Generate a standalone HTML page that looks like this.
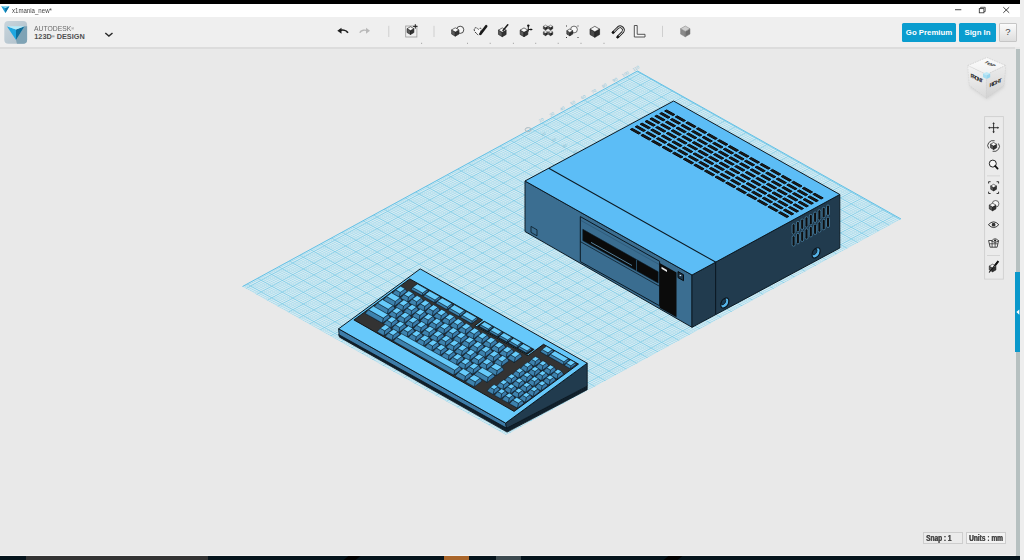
<!DOCTYPE html>
<html><head><meta charset="utf-8">
<style>
*{margin:0;padding:0;box-sizing:border-box}
html,body{width:1024px;height:560px;overflow:hidden;background:#e9e9e9;font-family:"Liberation Sans",sans-serif}
.a{position:absolute}
.btn{position:absolute;top:23px;height:19px;background:#0a9dcf;color:#fff;font-weight:bold;font-size:7.8px;line-height:19px;text-align:center;border-radius:1.5px}
svg{position:absolute;left:0;top:0}
.sb{position:absolute;top:532px;height:11.5px;border:1px solid #cdcdcd;font-size:8.2px;font-weight:bold;color:#474747;line-height:11.5px;white-space:nowrap;overflow:hidden;text-shadow:0.35px 0 #474747}
</style></head><body>
<div class="a" style="left:0;top:48px;width:1015px;height:508px;background:#e9e9e9"></div>
<div class="a" style="left:1015.5px;top:48.5px;width:4.3px;height:507px;background:#b6c0c0"></div>
<div class="a" style="left:1020px;top:0;width:4px;height:560px;background:#eeeeee"></div>
<div class="a" style="left:1015px;top:272px;width:5px;height:80px;background:#0a98cb"></div>
<div class="a" style="left:0;top:0;width:1020px;height:4px;background:#000"></div>
<div class="a" style="left:0;top:4px;width:1020px;height:12.5px;background:#fff"></div>
<div class="a" style="left:0;top:16.5px;width:1020px;height:30.5px;background:#efefef"></div>
<div class="a" style="left:0;top:46.5px;width:1015px;height:2.5px;background:#dcdcdc"></div>
<div class="a" style="left:0;top:555px;width:1015px;height:1px;background:#f2f2f2"></div>
<div class="a" style="left:0;top:556px;width:1020px;height:4px;background:#06141c"></div>
<div class="a" style="left:26px;top:556px;width:182px;height:4px;background:#333333"></div>
<div class="a" style="left:443.7px;top:556px;width:25.3px;height:4px;background:#a9652a"></div>
<div class="a" style="left:496px;top:556px;width:25px;height:4px;background:#3d4a50"></div>
<div class="a" style="left:346px;top:556px;width:12px;height:4px;background:#000;transform:skewX(-50deg)"></div>
<div class="a" style="left:666px;top:556px;width:14px;height:4px;background:#000;transform:skewX(-50deg)"></div>
<div class="btn" style="left:902px;width:54px">Go Premium</div>
<div class="btn" style="left:959px;width:37px">Sign In</div>
<div class="a" style="left:999px;top:23px;width:18px;height:18.5px;background:linear-gradient(#fbfbfb,#dedede);border:1px solid #c6c6c6;border-radius:1px;font-size:9.5px;line-height:16.5px;text-align:center;color:#444">?</div>
<div class="a" style="left:34.3px;top:25.3px;font-size:7.3px;line-height:8px;color:#6a6a6a;transform:scaleX(0.93);transform-origin:0 0;white-space:nowrap">AUTODESK<span style="font-size:4px;vertical-align:top">&reg;</span></div>
<div class="a" style="left:34.3px;top:33.2px;font-size:7.3px;line-height:8px;color:#505050;font-weight:bold;white-space:nowrap">123D<span style="font-size:4px;vertical-align:top">&reg;</span> DESIGN</div>
<div class="a" style="left:12px;top:6.5px;font-size:8px;line-height:8px;color:#444;transform:scaleX(0.76);transform-origin:0 0;white-space:nowrap">x1mania_new*</div>
<svg width="1024" height="560" viewBox="0 0 1024 560">
<polygon points="1.2,6.3 9.4,6.3 5.4,13.1" fill="#1b9fd6"/><polygon points="5.4,8 9.4,6.3 5.4,13.1" fill="#0f6e9c"/><polygon points="1.2,6.3 9.4,6.3 5.4,8" fill="#9fe0f5"/><defs><linearGradient id="lg1" x1="0" y1="0" x2="1" y2="1"><stop offset="0" stop-color="#c9d5dc"/><stop offset="1" stop-color="#aebfca"/></linearGradient><clipPath id="lc"><rect x="4.3" y="20.9" width="22.8" height="22.8" rx="4"/></clipPath></defs><rect x="4.3" y="20.9" width="22.8" height="22.8" rx="4" fill="url(#lg1)"/><polygon clip-path="url(#lc)" points="24.6,26.3 30,26.3 30,46 17.5,46 16,40" fill="#7fa3b5"/><polygon points="6.9,26.3 16,29.4 16,40" fill="#1fa7e0"/><polygon points="24.6,26.3 16,29.4 16,40" fill="#0e6f9c"/><polygon points="6.9,26.3 24.6,26.3 16,29.4" fill="#b5ebfa"/><polyline points="105.3,33 108.9,36 112.5,33" fill="none" stroke="#2a2a2a" stroke-width="1.5"/><path d="M339,30.8 C342,29.6 346,29.8 348,32.8" fill="none" stroke="#1e1e1e" stroke-width="1.6"/><polygon points="337.3,30.8 341.5,27.8 341.5,33.8" fill="#1e1e1e"/><path d="M368,30.8 C365,29.6 361,29.8 359.8,32.8" fill="none" stroke="#b9b9b9" stroke-width="1.4"/><polygon points="370,30.8 366,27.8 366,33.8" fill="#b9b9b9"/><rect x="388.3" y="25.8" width="1" height="11.2" fill="#cfcfcf"/><rect x="433.5" y="25.8" width="1" height="11.2" fill="#cfcfcf"/><rect x="662" y="25.8" width="1" height="11.2" fill="#cfcfcf"/><rect x="405.7" y="26" width="11.2" height="11" fill="none" stroke="#9a9a9a" stroke-width="0.8"/><polygon points="407.11,28.65 410.50,30.60 410.50,34.50 407.11,32.55" fill="#5a5a5a" stroke="#1a1a1a" stroke-width="0.6" stroke-linejoin="round"/><polygon points="410.50,30.60 413.89,28.65 413.89,32.55 410.50,34.50" fill="#333" stroke="#1a1a1a" stroke-width="0.6" stroke-linejoin="round"/><polygon points="410.50,26.70 413.89,28.65 410.50,30.60 407.11,28.65" fill="#fafafa" stroke="#1a1a1a" stroke-width="0.6" stroke-linejoin="round"/><path d="M415.3,24.2V28.6M413.1,26.4H417.5" stroke="#222" stroke-width="1"/><circle cx="460.2" cy="29.8" r="3.6" fill="#f6f6f6" stroke="#222" stroke-width="0.8"/><polygon points="451.65,29.90 455.30,32.00 455.30,36.20 451.65,34.10" fill="#5a5a5a" stroke="#1a1a1a" stroke-width="0.6" stroke-linejoin="round"/><polygon points="455.30,32.00 458.95,29.90 458.95,34.10 455.30,36.20" fill="#333" stroke="#1a1a1a" stroke-width="0.6" stroke-linejoin="round"/><polygon points="455.30,27.80 458.95,29.90 455.30,32.00 451.65,29.90" fill="#fafafa" stroke="#1a1a1a" stroke-width="0.6" stroke-linejoin="round"/><path d="M476.5,33.5 C473.5,31 473.5,27.5 476,27.8 C477.5,28 478,29 478.5,29.3 C479.5,28 481,27.8 481.5,29.5 L480,34 C479,35.5 477.8,35 476.5,33.5Z" fill="#f8f8f8" stroke="#222" stroke-width="0.9" stroke-dasharray="2 1"/><path d="M480.5,33.8 L486.2,26.2" stroke="#1a1a1a" stroke-width="2.6" stroke-linecap="round"/><polygon points="498.47,30.10 502.30,32.30 502.30,36.70 498.47,34.50" fill="#5a5a5a" stroke="#1a1a1a" stroke-width="0.6" stroke-linejoin="round"/><polygon points="502.30,32.30 506.13,30.10 506.13,34.50 502.30,36.70" fill="#333" stroke="#1a1a1a" stroke-width="0.6" stroke-linejoin="round"/><polygon points="502.30,27.90 506.13,30.10 502.30,32.30 498.47,30.10" fill="#fafafa" stroke="#1a1a1a" stroke-width="0.6" stroke-linejoin="round"/><path d="M503,30.5 L507.8,24.8" stroke="#1a1a1a" stroke-width="1.5" stroke-linecap="round"/><polygon points="520.17,30.10 524.00,32.30 524.00,36.70 520.17,34.50" fill="#5a5a5a" stroke="#1a1a1a" stroke-width="0.6" stroke-linejoin="round"/><polygon points="524.00,32.30 527.83,30.10 527.83,34.50 524.00,36.70" fill="#333" stroke="#1a1a1a" stroke-width="0.6" stroke-linejoin="round"/><polygon points="524.00,27.90 527.83,30.10 524.00,32.30 520.17,30.10" fill="#fafafa" stroke="#1a1a1a" stroke-width="0.6" stroke-linejoin="round"/><path d="M528.3,26 V31.5 M528.3,29.5 H532.2" stroke="#1a1a1a" stroke-width="1"/><polygon points="532.6,29.5 530.6,28.2 530.6,30.8" fill="#111"/><circle cx="528.3" cy="25.6" r="1.2" fill="#111"/><polygon points="543.33,26.35 545.50,27.60 545.50,30.10 543.33,28.85" fill="#444" stroke="#1a1a1a" stroke-width="0.4" stroke-linejoin="round"/><polygon points="545.50,27.60 547.67,26.35 547.67,28.85 545.50,30.10" fill="#222" stroke="#1a1a1a" stroke-width="0.4" stroke-linejoin="round"/><polygon points="545.50,25.10 547.67,26.35 545.50,27.60 543.33,26.35" fill="#f0f0f0" stroke="#1a1a1a" stroke-width="0.4" stroke-linejoin="round"/><polygon points="548.43,26.35 550.60,27.60 550.60,30.10 548.43,28.85" fill="#444" stroke="#1a1a1a" stroke-width="0.4" stroke-linejoin="round"/><polygon points="550.60,27.60 552.77,26.35 552.77,28.85 550.60,30.10" fill="#222" stroke="#1a1a1a" stroke-width="0.4" stroke-linejoin="round"/><polygon points="550.60,25.10 552.77,26.35 550.60,27.60 548.43,26.35" fill="#f0f0f0" stroke="#1a1a1a" stroke-width="0.4" stroke-linejoin="round"/><polygon points="543.33,31.95 545.50,33.20 545.50,35.70 543.33,34.45" fill="#444" stroke="#1a1a1a" stroke-width="0.4" stroke-linejoin="round"/><polygon points="545.50,33.20 547.67,31.95 547.67,34.45 545.50,35.70" fill="#222" stroke="#1a1a1a" stroke-width="0.4" stroke-linejoin="round"/><polygon points="545.50,30.70 547.67,31.95 545.50,33.20 543.33,31.95" fill="#f0f0f0" stroke="#1a1a1a" stroke-width="0.4" stroke-linejoin="round"/><polygon points="548.43,31.95 550.60,33.20 550.60,35.70 548.43,34.45" fill="#444" stroke="#1a1a1a" stroke-width="0.4" stroke-linejoin="round"/><polygon points="550.60,33.20 552.77,31.95 552.77,34.45 550.60,35.70" fill="#222" stroke="#1a1a1a" stroke-width="0.4" stroke-linejoin="round"/><polygon points="550.60,30.70 552.77,31.95 550.60,33.20 548.43,31.95" fill="#f0f0f0" stroke="#1a1a1a" stroke-width="0.4" stroke-linejoin="round"/><circle cx="574" cy="29.5" r="3.4" fill="#f8f8f8" stroke="#333" stroke-width="0.7"/><polygon points="566.84,30.70 569.80,32.40 569.80,35.80 566.84,34.10" fill="#5a5a5a" stroke="#1a1a1a" stroke-width="0.6" stroke-linejoin="round"/><polygon points="569.80,32.40 572.76,30.70 572.76,34.10 569.80,35.80" fill="#333" stroke="#1a1a1a" stroke-width="0.6" stroke-linejoin="round"/><polygon points="569.80,29.00 572.76,30.70 569.80,32.40 566.84,30.70" fill="#fafafa" stroke="#1a1a1a" stroke-width="0.6" stroke-linejoin="round"/><rect x="566" y="25.5" width="1" height="1" fill="#333"/><rect x="577.5" y="25.5" width="1" height="1" fill="#333"/><rect x="566" y="37" width="1" height="1" fill="#333"/><rect x="577.5" y="37" width="1" height="1" fill="#333"/><polygon points="590.01,29.05 594.80,31.80 594.80,37.30 590.01,34.55" fill="#4a4a4a" stroke="#1a1a1a" stroke-width="0.6" stroke-linejoin="round"/><polygon points="594.80,31.80 599.58,29.05 599.58,34.55 594.80,37.30" fill="#2e2e2e" stroke="#1a1a1a" stroke-width="0.6" stroke-linejoin="round"/><polygon points="594.80,26.30 599.58,29.05 594.80,31.80 590.01,29.05" fill="#f4f4f4" stroke="#1a1a1a" stroke-width="0.6" stroke-linejoin="round"/><path d="M613,32.6 L618.2,27.4 A3.3,3.3 0 0 1 622.8,32 L617.6,37.2" fill="none" stroke="#222" stroke-width="2.6"/><path d="M613,32.6 L618.2,27.4 A3.3,3.3 0 0 1 622.8,32 L617.6,37.2" fill="none" stroke="#f4f4f4" stroke-width="1"/><path d="M612.2,33.4 L614,31.6 M616.8,38 L618.6,36.2" stroke="#111" stroke-width="2.4"/><path d="M634.3,25.5 H637.2 V34.3 H645 V37 H634.3 Z" fill="#f6f6f6" stroke="#444" stroke-width="0.9"/><polygon points="680.60,28.70 685.30,31.40 685.30,36.80 680.60,34.10" fill="#8a8a8a" stroke="#7a7a7a" stroke-width="0.5" stroke-linejoin="round"/><polygon points="685.30,31.40 690.00,28.70 690.00,34.10 685.30,36.80" fill="#6e6e6e" stroke="#7a7a7a" stroke-width="0.5" stroke-linejoin="round"/><polygon points="685.30,26.00 690.00,28.70 685.30,31.40 680.60,28.70" fill="#cfcfcf" stroke="#7a7a7a" stroke-width="0.5" stroke-linejoin="round"/><rect x="421.1" y="42.8" width="1" height="1" fill="#9a9a9a"/><rect x="467.0" y="42.8" width="1" height="1" fill="#9a9a9a"/><rect x="489.7" y="42.8" width="1" height="1" fill="#9a9a9a"/><rect x="512.9" y="42.8" width="1" height="1" fill="#9a9a9a"/><rect x="535.2" y="42.8" width="1" height="1" fill="#9a9a9a"/><rect x="557.7" y="42.8" width="1" height="1" fill="#9a9a9a"/><rect x="580.5" y="42.8" width="1" height="1" fill="#9a9a9a"/><rect x="603.5" y="42.8" width="1" height="1" fill="#9a9a9a"/><defs><linearGradient id="vct" x1="0" y1="0" x2="0" y2="1"><stop offset="0" stop-color="#fbfbfb"/><stop offset="1" stop-color="#f0f0f0"/></linearGradient><linearGradient id="vcl" x1="0" y1="0" x2="0" y2="1"><stop offset="0" stop-color="#f4f4f4"/><stop offset="1" stop-color="#d9d9d9"/></linearGradient><linearGradient id="vcr" x1="0" y1="0" x2="0" y2="1"><stop offset="0" stop-color="#ececec"/><stop offset="1" stop-color="#d2d2d2"/></linearGradient><filter id="vsh" x="-30%" y="-30%" width="160%" height="160%"><feGaussianBlur stdDeviation="1.6"/></filter></defs><polygon points="969,66 987,58 1005,66 1004,86 987,98 970,86" fill="#bdbdbd" opacity="0.5" filter="url(#vsh)" transform="translate(0,1.5)"/><polygon points="967.7,65.5 986.9,57.5 1005.7,65.5 986.4,74.6" fill="url(#vct)" stroke="#c4c4c4" stroke-width="0.6" stroke-dasharray="1.6 1"/><polygon points="967.7,65.5 986.4,74.6 986.4,98.2 969.3,85.3" fill="url(#vcl)" stroke="#cfcfcf" stroke-width="0.5" stroke-dasharray="1.6 1"/><polygon points="1005.7,65.5 986.4,74.6 986.4,98.2 1004,85.3" fill="url(#vcr)" stroke="#cfcfcf" stroke-width="0.5" stroke-dasharray="1.6 1"/><polygon points="986.6,72 990.2,73.6 986.6,75.4 983,73.6" fill="#bfe9f7"/><polygon points="983,73.6 986.6,75.4 986.6,79 983,77.2" fill="#a6def3"/><polygon points="990.2,73.6 986.6,75.4 986.6,79 990.2,77.2" fill="#94d4ee"/><text x="0" y="0" font-family="Liberation Sans" font-weight="bold" font-size="5.2" fill="#222" transform="matrix(0.9 0.42 -0.9 0.42 983.6 62.6)">TOP</text><text x="0" y="0" font-family="Liberation Sans" font-weight="bold" font-size="5.6" fill="#1e1e1e" transform="matrix(0.95 0.45 0 1 970.4 77.2)" textLength="13.2">FRONT</text><text x="0" y="0" font-family="Liberation Sans" font-weight="bold" font-size="5.6" fill="#1e1e1e" transform="matrix(0.95 -0.45 0 1 989.4 87.6)" textLength="13">RIGHT</text><rect x="984.6" y="116.6" width="18.8" height="162.5" fill="#ebebeb" stroke="#d0d0d0" stroke-width="0.9"/><path d="M993.6,123.2V132.2M989.1,127.7H998.1" stroke="#222" stroke-width="0.9"/><polygon points="993.6,122.2 992.3000000000001,123.8 994.9,123.8" fill="#222"/><polygon points="993.6,133.2 992.3000000000001,131.6 994.9,131.6" fill="#222"/><polygon points="988.1,127.7 989.7,126.4 989.7,129" fill="#222"/><polygon points="999.1,127.7 997.5,126.4 997.5,129" fill="#222"/><polygon points="990.56,144.25 993.60,146.00 993.60,149.50 990.56,147.75" fill="#5a5a5a" stroke="#1a1a1a" stroke-width="0.6" stroke-linejoin="round"/><polygon points="993.60,146.00 996.64,144.25 996.64,147.75 993.60,149.50" fill="#333" stroke="#1a1a1a" stroke-width="0.6" stroke-linejoin="round"/><polygon points="993.60,142.50 996.64,144.25 993.60,146.00 990.56,144.25" fill="#fafafa" stroke="#1a1a1a" stroke-width="0.6" stroke-linejoin="round"/><path d="M988.8000000000001,148.5 A5.5,5 0 0 1 994.6,140.7" fill="none" stroke="#222" stroke-width="0.8"/><path d="M998.4,143.5 A5.5,5 0 0 1 992.6,151.3" fill="none" stroke="#222" stroke-width="0.8"/><circle cx="992.8000000000001" cy="163.6" r="3.5" fill="#f7f7f7" stroke="#222" stroke-width="1"/><path d="M995.2,166 L997.6,168.6" stroke="#111" stroke-width="1.8" stroke-linecap="round"/><rect x="987" y="175.5" width="13" height="0.8" fill="#cfcfcf"/><polygon points="990.73,185.95 993.60,187.60 993.60,190.90 990.73,189.25" fill="#5a5a5a" stroke="#1a1a1a" stroke-width="0.6" stroke-linejoin="round"/><polygon points="993.60,187.60 996.47,185.95 996.47,189.25 993.60,190.90" fill="#333" stroke="#1a1a1a" stroke-width="0.6" stroke-linejoin="round"/><polygon points="993.60,184.30 996.47,185.95 993.60,187.60 990.73,185.95" fill="#fafafa" stroke="#1a1a1a" stroke-width="0.6" stroke-linejoin="round"/><path d="M988.6,183.5V181.7H990.6 M996.6,181.7H998.6V183.5 M988.6,191.7V193.5H990.6 M996.6,193.5H998.6V191.7" fill="none" stroke="#222" stroke-width="0.9"/><circle cx="995.6" cy="203.8" r="3.3" fill="#f5f5f5" stroke="#333" stroke-width="0.7"/><polygon points="989.29,205.10 992.60,207.00 992.60,210.80 989.29,208.90" fill="#5a5a5a" stroke="#1a1a1a" stroke-width="0.6" stroke-linejoin="round"/><polygon points="992.60,207.00 995.91,205.10 995.91,208.90 992.60,210.80" fill="#333" stroke="#1a1a1a" stroke-width="0.6" stroke-linejoin="round"/><polygon points="992.60,203.20 995.91,205.10 992.60,207.00 989.29,205.10" fill="#fafafa" stroke="#1a1a1a" stroke-width="0.6" stroke-linejoin="round"/><path d="M988.4,224.7 Q993.6,219 998.8000000000001,224.7 Q993.6,230.4 988.4,224.7Z" fill="#f4f4f4" stroke="#222" stroke-width="0.9"/><circle cx="993.6" cy="224.7" r="1.9" fill="#333"/><path d="M988.6,240.5 L998.6,240.5 L997.1,247.2 L990.1,247.2Z" fill="#f4f4f4" stroke="#222" stroke-width="0.8"/><path d="M989.4,243.8H997.8000000000001M992.1,240.5V247.2M995.1,240.5V247.2" stroke="#222" stroke-width="0.7"/><path d="M991.6,241 Q995.1,236.5 998.6,241 Q995.1,244 991.6,241Z" fill="#eee" stroke="#222" stroke-width="0.8"/><circle cx="995.1" cy="240.6" r="1.1" fill="#222"/><rect x="987" y="255" width="13" height="0.8" fill="#cfcfcf"/><polygon points="989.29,266.10 992.60,268.00 992.60,271.80 989.29,269.90" fill="#5a5a5a" stroke="#1a1a1a" stroke-width="0.6" stroke-linejoin="round"/><polygon points="992.60,268.00 995.91,266.10 995.91,269.90 992.60,271.80" fill="#333" stroke="#1a1a1a" stroke-width="0.6" stroke-linejoin="round"/><polygon points="992.60,264.20 995.91,266.10 992.60,268.00 989.29,266.10" fill="#fafafa" stroke="#1a1a1a" stroke-width="0.6" stroke-linejoin="round"/><path d="M989.1,272.5 L998.1,261" stroke="#111" stroke-width="1.1"/><path d="M995.1,265.5 L998.4,261.2" stroke="#111" stroke-width="2"/><rect x="955" y="9.3" width="6.3" height="0.9" fill="#333"/><rect x="979.3" y="8.6" width="4.6" height="4.2" fill="none" stroke="#333" stroke-width="0.85"/><path d="M980.6,8.4V7.3H985.2V11.6H984" fill="none" stroke="#333" stroke-width="0.8"/><path d="M1003.3,7.2L1009.2,12.8M1009.2,7.2L1003.3,12.8" stroke="#333" stroke-width="0.9"/><polygon points="1016.4,312.1 1019.3,309.4 1019.3,314.8" fill="#ffffff"/>
<defs>
<pattern id="gmin" patternUnits="userSpaceOnUse" width="2" height="2" patternTransform="matrix(1.05333 -0.57467 1.05400 0.59400 249.875 285.983)"><rect width="2" height="2" fill="#d3ebf3"/><path d="M0 0H2M0 0V2" stroke="#92d0e8" stroke-width="0.6" fill="none"/></pattern>
<pattern id="gmaj" patternUnits="userSpaceOnUse" width="10" height="10" patternTransform="matrix(1.05333 -0.57467 1.05400 0.59400 249.875 285.983)"><path d="M0 0H10M0 0V10" stroke="#6cc6e6" stroke-width="0.9" fill="none"/></pattern>
</defs>
<polygon points="242.5,286.5 637.5,71.0 901.0,219.0 506.0,435.0" fill="url(#gmin)"/>
<polygon points="242.5,286.5 637.5,71.0 901.0,219.0 506.0,435.0" fill="url(#gmaj)"/>
<polyline points="242.5,286.5 637.5,71.0 901.0,219.0" fill="none" stroke="#62c0e6" stroke-width="1"/>
<text x="0" y="0" font-family="Liberation Sans" font-size="4.3" fill="#88c4da" text-anchor="middle" transform="matrix(0.88 -0.48 0.55 0.85 541.9 121.3)">20</text>
<text x="0" y="0" font-family="Liberation Sans" font-size="4.3" fill="#88c4da" text-anchor="middle" transform="matrix(0.88 -0.48 0.55 0.85 552.5 115.5)">30</text>
<text x="0" y="0" font-family="Liberation Sans" font-size="4.3" fill="#88c4da" text-anchor="middle" transform="matrix(0.88 -0.48 0.55 0.85 563.0 109.8)">40</text>
<text x="0" y="0" font-family="Liberation Sans" font-size="4.3" fill="#88c4da" text-anchor="middle" transform="matrix(0.88 -0.48 0.55 0.85 573.5 104.1)">50</text>
<text x="0" y="0" font-family="Liberation Sans" font-size="4.3" fill="#88c4da" text-anchor="middle" transform="matrix(0.88 -0.48 0.55 0.85 584.1 98.3)">60</text>
<text x="0" y="0" font-family="Liberation Sans" font-size="4.3" fill="#88c4da" text-anchor="middle" transform="matrix(0.88 -0.48 0.55 0.85 594.6 92.6)">70</text>
<text x="0" y="0" font-family="Liberation Sans" font-size="4.3" fill="#88c4da" text-anchor="middle" transform="matrix(0.88 -0.48 0.55 0.85 605.1 86.8)">80</text>
<text x="0" y="0" font-family="Liberation Sans" font-size="4.3" fill="#88c4da" text-anchor="middle" transform="matrix(0.88 -0.48 0.55 0.85 615.7 81.1)">90</text>
<text x="0" y="0" font-family="Liberation Sans" font-size="4.3" fill="#88c4da" text-anchor="middle" transform="matrix(0.88 -0.48 0.55 0.85 626.2 75.3)">100</text>
<text x="0" y="0" font-family="Liberation Sans" font-size="4.3" fill="#88c4da" text-anchor="middle" transform="matrix(0.88 -0.48 0.55 0.85 636.7 69.6)">110</text>
<text x="0" y="0" font-family="Liberation Sans" font-size="4" fill="#7fbcd2" transform="matrix(0.88 -0.48 0.48 0.88 542.0 136.5)">10</text>
<text x="0" y="0" font-family="Liberation Sans" font-size="4" fill="#7fbcd2" transform="matrix(0.88 -0.48 0.48 0.88 552.6 142.4)">20</text>
<text x="0" y="0" font-family="Liberation Sans" font-size="4" fill="#7fbcd2" transform="matrix(0.88 -0.48 0.48 0.88 563.2 148.3)">30</text>
<text x="0" y="0" font-family="Liberation Sans" font-size="4" fill="#7fbcd2" transform="matrix(0.88 -0.48 0.48 0.88 573.8 154.2)">40</text>
<ellipse cx="528.2" cy="129.6" rx="3" ry="2" fill="none" stroke="#a9b9c0" stroke-width="1"/>
<polygon points="525.0,181.0 692.0,275.0 692.0,327.3 525.0,231.5" fill="#3b6e91" stroke="#0c1a24" stroke-width="1" stroke-linejoin="round"/>
<polygon points="692.0,275.0 839.8,194.5 839.8,248.0 692.0,327.3" fill="#213b4e" stroke="#0c1a24" stroke-width="1" stroke-linejoin="round"/>
<polygon points="525.0,181.0 673.6,101.0 839.8,194.5 692.0,275.0" fill="#5cbdf6" stroke="#0c1a24" stroke-width="1" stroke-linejoin="round"/>
<polyline points="548.8,168.2 715.6,262.1 715.6,314.6" fill="none" stroke="#0c1a24" stroke-width="1.1"/>
<polygon points="666.6,109.9 674.9,114.5 672.9,115.6 664.6,111.0" fill="#1c1c1c" stroke="#0a0a0a" stroke-width="1" stroke-linejoin="round"/>
<polygon points="677.2,115.8 685.5,120.5 683.5,121.6 675.2,116.9" fill="#1c1c1c" stroke="#0a0a0a" stroke-width="1" stroke-linejoin="round"/>
<polygon points="687.8,121.8 696.1,126.5 694.1,127.5 685.8,122.9" fill="#1c1c1c" stroke="#0a0a0a" stroke-width="1" stroke-linejoin="round"/>
<polygon points="698.4,127.7 706.7,132.4 704.7,133.5 696.4,128.8" fill="#1c1c1c" stroke="#0a0a0a" stroke-width="1" stroke-linejoin="round"/>
<polygon points="709.0,133.7 717.3,138.4 715.3,139.5 707.0,134.8" fill="#1c1c1c" stroke="#0a0a0a" stroke-width="1" stroke-linejoin="round"/>
<polygon points="719.6,139.7 727.9,144.3 725.9,145.4 717.5,140.7" fill="#1c1c1c" stroke="#0a0a0a" stroke-width="1" stroke-linejoin="round"/>
<polygon points="730.2,145.6 738.5,150.3 736.4,151.4 728.1,146.7" fill="#1c1c1c" stroke="#0a0a0a" stroke-width="1" stroke-linejoin="round"/>
<polygon points="740.7,151.6 749.1,156.2 747.0,157.3 738.7,152.7" fill="#1c1c1c" stroke="#0a0a0a" stroke-width="1" stroke-linejoin="round"/>
<polygon points="751.3,157.5 759.6,162.2 757.6,163.3 749.3,158.6" fill="#1c1c1c" stroke="#0a0a0a" stroke-width="1" stroke-linejoin="round"/>
<polygon points="761.9,163.5 770.2,168.2 768.2,169.2 759.9,164.6" fill="#1c1c1c" stroke="#0a0a0a" stroke-width="1" stroke-linejoin="round"/>
<polygon points="772.5,169.4 780.8,174.1 778.8,175.2 770.5,170.5" fill="#1c1c1c" stroke="#0a0a0a" stroke-width="1" stroke-linejoin="round"/>
<polygon points="783.1,175.4 791.4,180.1 789.4,181.2 781.1,176.5" fill="#1c1c1c" stroke="#0a0a0a" stroke-width="1" stroke-linejoin="round"/>
<polygon points="793.7,181.3 802.0,186.0 800.0,187.1 791.7,182.4" fill="#1c1c1c" stroke="#0a0a0a" stroke-width="1" stroke-linejoin="round"/>
<polygon points="804.3,187.3 812.6,192.0 810.6,193.1 802.2,188.4" fill="#1c1c1c" stroke="#0a0a0a" stroke-width="1" stroke-linejoin="round"/>
<polygon points="814.9,193.3 823.2,197.9 821.1,199.0 812.8,194.3" fill="#1c1c1c" stroke="#0a0a0a" stroke-width="1" stroke-linejoin="round"/>
<polygon points="661.7,112.5 670.0,117.2 668.0,118.3 659.7,113.6" fill="#1c1c1c" stroke="#0a0a0a" stroke-width="1" stroke-linejoin="round"/>
<polygon points="672.3,118.5 680.6,123.1 678.6,124.2 670.3,119.6" fill="#1c1c1c" stroke="#0a0a0a" stroke-width="1" stroke-linejoin="round"/>
<polygon points="682.9,124.4 691.2,129.1 689.2,130.2 680.9,125.5" fill="#1c1c1c" stroke="#0a0a0a" stroke-width="1" stroke-linejoin="round"/>
<polygon points="693.5,130.4 701.8,135.1 699.8,136.1 691.5,131.5" fill="#1c1c1c" stroke="#0a0a0a" stroke-width="1" stroke-linejoin="round"/>
<polygon points="704.1,136.3 712.4,141.0 710.4,142.1 702.1,137.4" fill="#1c1c1c" stroke="#0a0a0a" stroke-width="1" stroke-linejoin="round"/>
<polygon points="714.7,142.3 723.0,147.0 721.0,148.1 712.6,143.4" fill="#1c1c1c" stroke="#0a0a0a" stroke-width="1" stroke-linejoin="round"/>
<polygon points="725.3,148.2 733.6,152.9 731.5,154.0 723.2,149.3" fill="#1c1c1c" stroke="#0a0a0a" stroke-width="1" stroke-linejoin="round"/>
<polygon points="735.8,154.2 744.1,158.9 742.1,160.0 733.8,155.3" fill="#1c1c1c" stroke="#0a0a0a" stroke-width="1" stroke-linejoin="round"/>
<polygon points="746.4,160.2 754.7,164.8 752.7,165.9 744.4,161.2" fill="#1c1c1c" stroke="#0a0a0a" stroke-width="1" stroke-linejoin="round"/>
<polygon points="757.0,166.1 765.3,170.8 763.3,171.9 755.0,167.2" fill="#1c1c1c" stroke="#0a0a0a" stroke-width="1" stroke-linejoin="round"/>
<polygon points="767.6,172.1 775.9,176.7 773.9,177.8 765.6,173.2" fill="#1c1c1c" stroke="#0a0a0a" stroke-width="1" stroke-linejoin="round"/>
<polygon points="778.2,178.0 786.5,182.7 784.5,183.8 776.2,179.1" fill="#1c1c1c" stroke="#0a0a0a" stroke-width="1" stroke-linejoin="round"/>
<polygon points="788.8,184.0 797.1,188.7 795.1,189.7 786.8,185.1" fill="#1c1c1c" stroke="#0a0a0a" stroke-width="1" stroke-linejoin="round"/>
<polygon points="799.4,189.9 807.7,194.6 805.6,195.7 797.3,191.0" fill="#1c1c1c" stroke="#0a0a0a" stroke-width="1" stroke-linejoin="round"/>
<polygon points="809.9,195.9 818.3,200.6 816.2,201.7 807.9,197.0" fill="#1c1c1c" stroke="#0a0a0a" stroke-width="1" stroke-linejoin="round"/>
<polygon points="656.8,115.2 665.1,119.8 663.1,120.9 654.8,116.2" fill="#1c1c1c" stroke="#0a0a0a" stroke-width="1" stroke-linejoin="round"/>
<polygon points="667.4,121.1 675.7,125.8 673.7,126.9 665.4,122.2" fill="#1c1c1c" stroke="#0a0a0a" stroke-width="1" stroke-linejoin="round"/>
<polygon points="678.0,127.1 686.3,131.7 684.3,132.8 676.0,128.2" fill="#1c1c1c" stroke="#0a0a0a" stroke-width="1" stroke-linejoin="round"/>
<polygon points="688.6,133.0 696.9,137.7 694.9,138.8 686.6,134.1" fill="#1c1c1c" stroke="#0a0a0a" stroke-width="1" stroke-linejoin="round"/>
<polygon points="699.2,139.0 707.5,143.7 705.5,144.7 697.2,140.1" fill="#1c1c1c" stroke="#0a0a0a" stroke-width="1" stroke-linejoin="round"/>
<polygon points="709.8,144.9 718.1,149.6 716.0,150.7 707.7,146.0" fill="#1c1c1c" stroke="#0a0a0a" stroke-width="1" stroke-linejoin="round"/>
<polygon points="720.3,150.9 728.7,155.6 726.6,156.7 718.3,152.0" fill="#1c1c1c" stroke="#0a0a0a" stroke-width="1" stroke-linejoin="round"/>
<polygon points="730.9,156.8 739.2,161.5 737.2,162.6 728.9,157.9" fill="#1c1c1c" stroke="#0a0a0a" stroke-width="1" stroke-linejoin="round"/>
<polygon points="741.5,162.8 749.8,167.5 747.8,168.6 739.5,163.9" fill="#1c1c1c" stroke="#0a0a0a" stroke-width="1" stroke-linejoin="round"/>
<polygon points="752.1,168.8 760.4,173.4 758.4,174.5 750.1,169.8" fill="#1c1c1c" stroke="#0a0a0a" stroke-width="1" stroke-linejoin="round"/>
<polygon points="762.7,174.7 771.0,179.4 769.0,180.5 760.7,175.8" fill="#1c1c1c" stroke="#0a0a0a" stroke-width="1" stroke-linejoin="round"/>
<polygon points="773.3,180.7 781.6,185.3 779.6,186.4 771.3,181.8" fill="#1c1c1c" stroke="#0a0a0a" stroke-width="1" stroke-linejoin="round"/>
<polygon points="783.9,186.6 792.2,191.3 790.2,192.4 781.8,187.7" fill="#1c1c1c" stroke="#0a0a0a" stroke-width="1" stroke-linejoin="round"/>
<polygon points="794.5,192.6 802.8,197.3 800.7,198.3 792.4,193.7" fill="#1c1c1c" stroke="#0a0a0a" stroke-width="1" stroke-linejoin="round"/>
<polygon points="805.0,198.5 813.4,203.2 811.3,204.3 803.0,199.6" fill="#1c1c1c" stroke="#0a0a0a" stroke-width="1" stroke-linejoin="round"/>
<polygon points="651.9,117.8 660.2,122.5 658.2,123.6 649.9,118.9" fill="#1c1c1c" stroke="#0a0a0a" stroke-width="1" stroke-linejoin="round"/>
<polygon points="662.5,123.7 670.8,128.4 668.8,129.5 660.5,124.8" fill="#1c1c1c" stroke="#0a0a0a" stroke-width="1" stroke-linejoin="round"/>
<polygon points="673.1,129.7 681.4,134.4 679.4,135.5 671.1,130.8" fill="#1c1c1c" stroke="#0a0a0a" stroke-width="1" stroke-linejoin="round"/>
<polygon points="683.7,135.7 692.0,140.3 690.0,141.4 681.7,136.7" fill="#1c1c1c" stroke="#0a0a0a" stroke-width="1" stroke-linejoin="round"/>
<polygon points="694.3,141.6 702.6,146.3 700.6,147.4 692.2,142.7" fill="#1c1c1c" stroke="#0a0a0a" stroke-width="1" stroke-linejoin="round"/>
<polygon points="704.9,147.6 713.2,152.2 711.1,153.3 702.8,148.7" fill="#1c1c1c" stroke="#0a0a0a" stroke-width="1" stroke-linejoin="round"/>
<polygon points="715.4,153.5 723.8,158.2 721.7,159.3 713.4,154.6" fill="#1c1c1c" stroke="#0a0a0a" stroke-width="1" stroke-linejoin="round"/>
<polygon points="726.0,159.5 734.3,164.2 732.3,165.2 724.0,160.6" fill="#1c1c1c" stroke="#0a0a0a" stroke-width="1" stroke-linejoin="round"/>
<polygon points="736.6,165.4 744.9,170.1 742.9,171.2 734.6,166.5" fill="#1c1c1c" stroke="#0a0a0a" stroke-width="1" stroke-linejoin="round"/>
<polygon points="747.2,171.4 755.5,176.1 753.5,177.2 745.2,172.5" fill="#1c1c1c" stroke="#0a0a0a" stroke-width="1" stroke-linejoin="round"/>
<polygon points="757.8,177.4 766.1,182.0 764.1,183.1 755.8,178.4" fill="#1c1c1c" stroke="#0a0a0a" stroke-width="1" stroke-linejoin="round"/>
<polygon points="768.4,183.3 776.7,188.0 774.7,189.1 766.4,184.4" fill="#1c1c1c" stroke="#0a0a0a" stroke-width="1" stroke-linejoin="round"/>
<polygon points="779.0,189.3 787.3,193.9 785.3,195.0 776.9,190.4" fill="#1c1c1c" stroke="#0a0a0a" stroke-width="1" stroke-linejoin="round"/>
<polygon points="789.6,195.2 797.9,199.9 795.8,201.0 787.5,196.3" fill="#1c1c1c" stroke="#0a0a0a" stroke-width="1" stroke-linejoin="round"/>
<polygon points="800.1,201.2 808.4,205.9 806.4,206.9 798.1,202.3" fill="#1c1c1c" stroke="#0a0a0a" stroke-width="1" stroke-linejoin="round"/>
<polygon points="647.0,120.4 655.3,125.1 653.3,126.2 645.0,121.5" fill="#1c1c1c" stroke="#0a0a0a" stroke-width="1" stroke-linejoin="round"/>
<polygon points="657.6,126.4 665.9,131.1 663.9,132.2 655.6,127.5" fill="#1c1c1c" stroke="#0a0a0a" stroke-width="1" stroke-linejoin="round"/>
<polygon points="668.2,132.3 676.5,137.0 674.5,138.1 666.2,133.4" fill="#1c1c1c" stroke="#0a0a0a" stroke-width="1" stroke-linejoin="round"/>
<polygon points="678.8,138.3 687.1,143.0 685.1,144.1 676.8,139.4" fill="#1c1c1c" stroke="#0a0a0a" stroke-width="1" stroke-linejoin="round"/>
<polygon points="689.4,144.3 697.7,148.9 695.7,150.0 687.3,145.3" fill="#1c1c1c" stroke="#0a0a0a" stroke-width="1" stroke-linejoin="round"/>
<polygon points="700.0,150.2 708.3,154.9 706.2,156.0 697.9,151.3" fill="#1c1c1c" stroke="#0a0a0a" stroke-width="1" stroke-linejoin="round"/>
<polygon points="710.5,156.2 718.8,160.8 716.8,161.9 708.5,157.3" fill="#1c1c1c" stroke="#0a0a0a" stroke-width="1" stroke-linejoin="round"/>
<polygon points="721.1,162.1 729.4,166.8 727.4,167.9 719.1,163.2" fill="#1c1c1c" stroke="#0a0a0a" stroke-width="1" stroke-linejoin="round"/>
<polygon points="731.7,168.1 740.0,172.8 738.0,173.8 729.7,169.2" fill="#1c1c1c" stroke="#0a0a0a" stroke-width="1" stroke-linejoin="round"/>
<polygon points="742.3,174.0 750.6,178.7 748.6,179.8 740.3,175.1" fill="#1c1c1c" stroke="#0a0a0a" stroke-width="1" stroke-linejoin="round"/>
<polygon points="752.9,180.0 761.2,184.7 759.2,185.8 750.9,181.1" fill="#1c1c1c" stroke="#0a0a0a" stroke-width="1" stroke-linejoin="round"/>
<polygon points="763.5,185.9 771.8,190.6 769.8,191.7 761.5,187.0" fill="#1c1c1c" stroke="#0a0a0a" stroke-width="1" stroke-linejoin="round"/>
<polygon points="774.1,191.9 782.4,196.6 780.4,197.7 772.0,193.0" fill="#1c1c1c" stroke="#0a0a0a" stroke-width="1" stroke-linejoin="round"/>
<polygon points="784.6,197.9 793.0,202.5 790.9,203.6 782.6,198.9" fill="#1c1c1c" stroke="#0a0a0a" stroke-width="1" stroke-linejoin="round"/>
<polygon points="795.2,203.8 803.5,208.5 801.5,209.6 793.2,204.9" fill="#1c1c1c" stroke="#0a0a0a" stroke-width="1" stroke-linejoin="round"/>
<polygon points="642.1,123.1 650.4,127.7 648.4,128.8 640.1,124.2" fill="#1c1c1c" stroke="#0a0a0a" stroke-width="1" stroke-linejoin="round"/>
<polygon points="652.7,129.0 661.0,133.7 659.0,134.8 650.7,130.1" fill="#1c1c1c" stroke="#0a0a0a" stroke-width="1" stroke-linejoin="round"/>
<polygon points="663.3,135.0 671.6,139.7 669.6,140.7 661.3,136.1" fill="#1c1c1c" stroke="#0a0a0a" stroke-width="1" stroke-linejoin="round"/>
<polygon points="673.9,140.9 682.2,145.6 680.2,146.7 671.9,142.0" fill="#1c1c1c" stroke="#0a0a0a" stroke-width="1" stroke-linejoin="round"/>
<polygon points="684.5,146.9 692.8,151.6 690.8,152.7 682.4,148.0" fill="#1c1c1c" stroke="#0a0a0a" stroke-width="1" stroke-linejoin="round"/>
<polygon points="695.0,152.9 703.4,157.5 701.3,158.6 693.0,153.9" fill="#1c1c1c" stroke="#0a0a0a" stroke-width="1" stroke-linejoin="round"/>
<polygon points="705.6,158.8 713.9,163.5 711.9,164.6 703.6,159.9" fill="#1c1c1c" stroke="#0a0a0a" stroke-width="1" stroke-linejoin="round"/>
<polygon points="716.2,164.8 724.5,169.4 722.5,170.5 714.2,165.9" fill="#1c1c1c" stroke="#0a0a0a" stroke-width="1" stroke-linejoin="round"/>
<polygon points="726.8,170.7 735.1,175.4 733.1,176.5 724.8,171.8" fill="#1c1c1c" stroke="#0a0a0a" stroke-width="1" stroke-linejoin="round"/>
<polygon points="737.4,176.7 745.7,181.4 743.7,182.4 735.4,177.8" fill="#1c1c1c" stroke="#0a0a0a" stroke-width="1" stroke-linejoin="round"/>
<polygon points="748.0,182.6 756.3,187.3 754.3,188.4 746.0,183.7" fill="#1c1c1c" stroke="#0a0a0a" stroke-width="1" stroke-linejoin="round"/>
<polygon points="758.6,188.6 766.9,193.3 764.9,194.4 756.5,189.7" fill="#1c1c1c" stroke="#0a0a0a" stroke-width="1" stroke-linejoin="round"/>
<polygon points="769.2,194.5 777.5,199.2 775.4,200.3 767.1,195.6" fill="#1c1c1c" stroke="#0a0a0a" stroke-width="1" stroke-linejoin="round"/>
<polygon points="779.7,200.5 788.1,205.2 786.0,206.3 777.7,201.6" fill="#1c1c1c" stroke="#0a0a0a" stroke-width="1" stroke-linejoin="round"/>
<polygon points="790.3,206.5 798.6,211.1 796.6,212.2 788.3,207.5" fill="#1c1c1c" stroke="#0a0a0a" stroke-width="1" stroke-linejoin="round"/>
<polygon points="637.2,125.7 645.5,130.4 643.5,131.5 635.2,126.8" fill="#1c1c1c" stroke="#0a0a0a" stroke-width="1" stroke-linejoin="round"/>
<polygon points="647.8,131.7 656.1,136.3 654.1,137.4 645.8,132.8" fill="#1c1c1c" stroke="#0a0a0a" stroke-width="1" stroke-linejoin="round"/>
<polygon points="658.4,137.6 666.7,142.3 664.7,143.4 656.4,138.7" fill="#1c1c1c" stroke="#0a0a0a" stroke-width="1" stroke-linejoin="round"/>
<polygon points="669.0,143.6 677.3,148.3 675.3,149.3 667.0,144.7" fill="#1c1c1c" stroke="#0a0a0a" stroke-width="1" stroke-linejoin="round"/>
<polygon points="679.6,149.5 687.9,154.2 685.8,155.3 677.5,150.6" fill="#1c1c1c" stroke="#0a0a0a" stroke-width="1" stroke-linejoin="round"/>
<polygon points="690.1,155.5 698.5,160.2 696.4,161.3 688.1,156.6" fill="#1c1c1c" stroke="#0a0a0a" stroke-width="1" stroke-linejoin="round"/>
<polygon points="700.7,161.4 709.0,166.1 707.0,167.2 698.7,162.5" fill="#1c1c1c" stroke="#0a0a0a" stroke-width="1" stroke-linejoin="round"/>
<polygon points="711.3,167.4 719.6,172.1 717.6,173.2 709.3,168.5" fill="#1c1c1c" stroke="#0a0a0a" stroke-width="1" stroke-linejoin="round"/>
<polygon points="721.9,173.4 730.2,178.0 728.2,179.1 719.9,174.4" fill="#1c1c1c" stroke="#0a0a0a" stroke-width="1" stroke-linejoin="round"/>
<polygon points="732.5,179.3 740.8,184.0 738.8,185.1 730.5,180.4" fill="#1c1c1c" stroke="#0a0a0a" stroke-width="1" stroke-linejoin="round"/>
<polygon points="743.1,185.3 751.4,189.9 749.4,191.0 741.1,186.4" fill="#1c1c1c" stroke="#0a0a0a" stroke-width="1" stroke-linejoin="round"/>
<polygon points="753.7,191.2 762.0,195.9 760.0,197.0 751.6,192.3" fill="#1c1c1c" stroke="#0a0a0a" stroke-width="1" stroke-linejoin="round"/>
<polygon points="764.3,197.2 772.6,201.9 770.5,202.9 762.2,198.3" fill="#1c1c1c" stroke="#0a0a0a" stroke-width="1" stroke-linejoin="round"/>
<polygon points="774.8,203.1 783.2,207.8 781.1,208.9 772.8,204.2" fill="#1c1c1c" stroke="#0a0a0a" stroke-width="1" stroke-linejoin="round"/>
<polygon points="785.4,209.1 793.7,213.8 791.7,214.9 783.4,210.2" fill="#1c1c1c" stroke="#0a0a0a" stroke-width="1" stroke-linejoin="round"/>
<polygon points="632.3,128.4 640.6,133.0 638.6,134.1 630.3,129.4" fill="#1c1c1c" stroke="#0a0a0a" stroke-width="1" stroke-linejoin="round"/>
<polygon points="642.9,134.3 651.2,139.0 649.2,140.1 640.9,135.4" fill="#1c1c1c" stroke="#0a0a0a" stroke-width="1" stroke-linejoin="round"/>
<polygon points="653.5,140.3 661.8,144.9 659.8,146.0 651.5,141.4" fill="#1c1c1c" stroke="#0a0a0a" stroke-width="1" stroke-linejoin="round"/>
<polygon points="664.1,146.2 672.4,150.9 670.4,152.0 662.0,147.3" fill="#1c1c1c" stroke="#0a0a0a" stroke-width="1" stroke-linejoin="round"/>
<polygon points="674.7,152.2 683.0,156.9 680.9,157.9 672.6,153.3" fill="#1c1c1c" stroke="#0a0a0a" stroke-width="1" stroke-linejoin="round"/>
<polygon points="685.2,158.1 693.6,162.8 691.5,163.9 683.2,159.2" fill="#1c1c1c" stroke="#0a0a0a" stroke-width="1" stroke-linejoin="round"/>
<polygon points="695.8,164.1 704.1,168.8 702.1,169.9 693.8,165.2" fill="#1c1c1c" stroke="#0a0a0a" stroke-width="1" stroke-linejoin="round"/>
<polygon points="706.4,170.0 714.7,174.7 712.7,175.8 704.4,171.1" fill="#1c1c1c" stroke="#0a0a0a" stroke-width="1" stroke-linejoin="round"/>
<polygon points="717.0,176.0 725.3,180.7 723.3,181.8 715.0,177.1" fill="#1c1c1c" stroke="#0a0a0a" stroke-width="1" stroke-linejoin="round"/>
<polygon points="727.6,182.0 735.9,186.6 733.9,187.7 725.6,183.0" fill="#1c1c1c" stroke="#0a0a0a" stroke-width="1" stroke-linejoin="round"/>
<polygon points="738.2,187.9 746.5,192.6 744.5,193.7 736.2,189.0" fill="#1c1c1c" stroke="#0a0a0a" stroke-width="1" stroke-linejoin="round"/>
<polygon points="748.8,193.9 757.1,198.5 755.1,199.6 746.7,195.0" fill="#1c1c1c" stroke="#0a0a0a" stroke-width="1" stroke-linejoin="round"/>
<polygon points="759.3,199.8 767.7,204.5 765.6,205.6 757.3,200.9" fill="#1c1c1c" stroke="#0a0a0a" stroke-width="1" stroke-linejoin="round"/>
<polygon points="769.9,205.8 778.2,210.5 776.2,211.5 767.9,206.9" fill="#1c1c1c" stroke="#0a0a0a" stroke-width="1" stroke-linejoin="round"/>
<polygon points="780.5,211.7 788.8,216.4 786.8,217.5 778.5,212.8" fill="#1c1c1c" stroke="#0a0a0a" stroke-width="1" stroke-linejoin="round"/>
<rect x="792.1" y="223.7" width="3" height="10.5" rx="1.5" fill="#0e0e0e" stroke="#4a84a8" stroke-width="0.8"/>
<rect x="796.4" y="221.4" width="3" height="10.5" rx="1.5" fill="#0e0e0e" stroke="#4a84a8" stroke-width="0.8"/>
<rect x="800.7" y="219.0" width="3" height="10.5" rx="1.5" fill="#0e0e0e" stroke="#4a84a8" stroke-width="0.8"/>
<rect x="805.0" y="216.7" width="3" height="10.5" rx="1.5" fill="#0e0e0e" stroke="#4a84a8" stroke-width="0.8"/>
<rect x="809.3" y="214.4" width="3" height="10.5" rx="1.5" fill="#0e0e0e" stroke="#4a84a8" stroke-width="0.8"/>
<rect x="813.6" y="212.0" width="3" height="10.5" rx="1.5" fill="#0e0e0e" stroke="#4a84a8" stroke-width="0.8"/>
<rect x="817.9" y="209.7" width="3" height="10.5" rx="1.5" fill="#0e0e0e" stroke="#4a84a8" stroke-width="0.8"/>
<rect x="822.2" y="207.3" width="3" height="10.5" rx="1.5" fill="#0e0e0e" stroke="#4a84a8" stroke-width="0.8"/>
<rect x="826.5" y="205.0" width="3" height="10.5" rx="1.5" fill="#0e0e0e" stroke="#4a84a8" stroke-width="0.8"/>
<rect x="792.1" y="235.7" width="3" height="10.5" rx="1.5" fill="#0e0e0e" stroke="#4a84a8" stroke-width="0.8"/>
<rect x="796.4" y="233.4" width="3" height="10.5" rx="1.5" fill="#0e0e0e" stroke="#4a84a8" stroke-width="0.8"/>
<rect x="800.7" y="231.0" width="3" height="10.5" rx="1.5" fill="#0e0e0e" stroke="#4a84a8" stroke-width="0.8"/>
<rect x="805.0" y="228.7" width="3" height="10.5" rx="1.5" fill="#0e0e0e" stroke="#4a84a8" stroke-width="0.8"/>
<rect x="809.3" y="226.4" width="3" height="10.5" rx="1.5" fill="#0e0e0e" stroke="#4a84a8" stroke-width="0.8"/>
<rect x="813.6" y="224.0" width="3" height="10.5" rx="1.5" fill="#0e0e0e" stroke="#4a84a8" stroke-width="0.8"/>
<rect x="817.9" y="221.7" width="3" height="10.5" rx="1.5" fill="#0e0e0e" stroke="#4a84a8" stroke-width="0.8"/>
<rect x="822.2" y="219.3" width="3" height="10.5" rx="1.5" fill="#0e0e0e" stroke="#4a84a8" stroke-width="0.8"/>
<rect x="826.5" y="217.0" width="3" height="10.5" rx="1.5" fill="#0e0e0e" stroke="#4a84a8" stroke-width="0.8"/>
<circle r="1" fill="#56b4e8" stroke="#0a141c" stroke-width="1.1" vector-effect="non-scaling-stroke" transform="matrix(4.002 -2.254 0 4.600 816.1 252.9)"/>
<circle r="1" fill="#1b3a50" stroke="#0a141c" stroke-width="0.8" vector-effect="non-scaling-stroke" transform="matrix(2.262 -1.274 0 2.600 814.8000000000001 251.8)"/>
<circle r="1" fill="#56b4e8" stroke="#0a141c" stroke-width="1.1" vector-effect="non-scaling-stroke" transform="matrix(4.002 -2.254 0 4.600 724.8 303)"/>
<circle r="1" fill="#1b3a50" stroke="#0a141c" stroke-width="0.8" vector-effect="non-scaling-stroke" transform="matrix(2.262 -1.274 0 2.600 723.5 301.9)"/>
<polygon points="580.3,216.6 659.6,261.3 659.6,305.8 580.3,261.6" fill="#3a6d90" stroke="#0c1a24" stroke-width="1"/>
<line x1="581" y1="220.5" x2="659" y2="264.4" stroke="#2a5270" stroke-width="0.6"/>
<polygon points="582.8,229.3 658.2,271.8 658.2,283.0 582.8,240.5" fill="#0a0a0a" stroke="#0c1a24" stroke-width="0.6"/>
<line x1="591" y1="242.4" x2="632" y2="265.5" stroke="#5e8eae" stroke-width="0.9"/>
<line x1="636.5" y1="259.8" x2="636.5" y2="270.8" stroke="#2e5a78" stroke-width="0.8"/>
<line x1="580.3" y1="241.6" x2="659.6" y2="286.3" stroke="#0c1a24" stroke-width="0.8"/>
<polygon points="659.6,263.0 676.5,272.5 676.5,317.3 659.6,307.8" fill="#0b0b0b"/>
<polygon points="661.5,266.8 667.0,269.9 667.0,271.9 661.5,268.8" fill="#e8e8e8"/>
<polygon points="678.0,271.6 683.5,274.7 683.5,280.7 678.0,277.6" fill="#1d3447" stroke="#050505" stroke-width="0.9"/>
<rect x="679.6" y="274.9" width="1.6" height="1.2" fill="#cfe3ee"/>
<polygon points="531.0,226.4 537.0,229.8 537.0,235.8 531.0,232.4" fill="none" stroke="#0a1a24" stroke-width="0.8"/>
<polygon points="338.6,334.6 506.6,428.1 587.2,386.2 587.2,389.7 507.1,432.1 339.6,337.2" fill="#10202c" stroke="#0a141c" stroke-width="0.8"/>
<polygon points="338.6,328.8 505.6,423.1 506.6,428.1 339.1,334.8" fill="#3d7ca8" stroke="#0c1a24" stroke-width="0.9"/>
<polygon points="505.6,423.1 587.2,363.2 587.2,386.2 506.6,428.1" fill="#213b4e" stroke="#0c1a24" stroke-width="0.9"/>
<polygon points="420.2,268.9 587.2,363.2 505.6,423.1 338.6,328.8" fill="#66c8fa" stroke="#0c1a24" stroke-width="1"/>
<polygon points="409.8,278.9 482.6,320.0 474.9,325.7 528.0,355.7 543.5,344.3 578.5,364.1 514.1,411.4 353.9,319.9" fill="#333333" stroke="#0c0c0c" stroke-width="0.9"/>
<polygon points="484.1,321.1 534.2,349.4 527.2,354.5 477.1,326.2" fill="#1c1c1c" stroke="#0c0c0c" stroke-width="0.6"/>
<polygon points="417.2,285.0 428.2,291.2 422.2,295.6 411.1,289.4" fill="#3a78a4" stroke="#0a1620" stroke-width="0.6" stroke-linejoin="round"/>
<polygon points="428.2,291.2 422.2,295.6 422.6,293.0 427.4,289.6" fill="#3a7cab" stroke="#0a1620" stroke-width="0.5" stroke-linejoin="round"/>
<polygon points="411.1,289.4 422.2,295.6 422.6,293.0 412.6,287.4" fill="#3d82ae" stroke="#0a1620" stroke-width="0.5" stroke-linejoin="round"/>
<polygon points="417.4,283.9 427.4,289.6 422.6,293.0 412.6,287.4" fill="#66cbfb" stroke="#0a1620" stroke-width="0.55" stroke-linejoin="round"/>
<polygon points="429.5,292.0 440.6,298.2 434.5,302.6 423.5,296.4" fill="#3a78a4" stroke="#0a1620" stroke-width="0.6" stroke-linejoin="round"/>
<polygon points="440.6,298.2 434.5,302.6 435.0,300.0 439.7,296.5" fill="#3a7cab" stroke="#0a1620" stroke-width="0.5" stroke-linejoin="round"/>
<polygon points="423.5,296.4 434.5,302.6 435.0,300.0 425.0,294.4" fill="#3d82ae" stroke="#0a1620" stroke-width="0.5" stroke-linejoin="round"/>
<polygon points="429.7,290.9 439.7,296.5 435.0,300.0 425.0,294.4" fill="#66cbfb" stroke="#0a1620" stroke-width="0.55" stroke-linejoin="round"/>
<polygon points="441.9,298.9 452.9,305.2 446.9,309.6 435.9,303.4" fill="#3a78a4" stroke="#0a1620" stroke-width="0.6" stroke-linejoin="round"/>
<polygon points="452.9,305.2 446.9,309.6 447.4,307.0 452.1,303.5" fill="#3a7cab" stroke="#0a1620" stroke-width="0.5" stroke-linejoin="round"/>
<polygon points="435.9,303.4 446.9,309.6 447.4,307.0 437.3,301.3" fill="#3d82ae" stroke="#0a1620" stroke-width="0.5" stroke-linejoin="round"/>
<polygon points="442.1,297.9 452.1,303.5 447.4,307.0 437.3,301.3" fill="#66cbfb" stroke="#0a1620" stroke-width="0.55" stroke-linejoin="round"/>
<polygon points="454.3,305.9 465.3,312.1 459.2,316.6 448.2,310.4" fill="#3a78a4" stroke="#0a1620" stroke-width="0.6" stroke-linejoin="round"/>
<polygon points="465.3,312.1 459.2,316.6 459.7,314.0 464.4,310.5" fill="#3a7cab" stroke="#0a1620" stroke-width="0.5" stroke-linejoin="round"/>
<polygon points="448.2,310.4 459.2,316.6 459.7,314.0 449.7,308.3" fill="#3d82ae" stroke="#0a1620" stroke-width="0.5" stroke-linejoin="round"/>
<polygon points="454.4,304.8 464.4,310.5 459.7,314.0 449.7,308.3" fill="#66cbfb" stroke="#0a1620" stroke-width="0.55" stroke-linejoin="round"/>
<polygon points="466.6,312.9 477.6,319.1 471.6,323.6 460.6,317.3" fill="#3a78a4" stroke="#0a1620" stroke-width="0.6" stroke-linejoin="round"/>
<polygon points="477.6,319.1 471.6,323.6 472.1,321.0 476.8,317.5" fill="#3a7cab" stroke="#0a1620" stroke-width="0.5" stroke-linejoin="round"/>
<polygon points="460.6,317.3 471.6,323.6 472.1,321.0 462.1,315.3" fill="#3d82ae" stroke="#0a1620" stroke-width="0.5" stroke-linejoin="round"/>
<polygon points="466.8,311.8 476.8,317.5 472.1,321.0 462.1,315.3" fill="#66cbfb" stroke="#0a1620" stroke-width="0.55" stroke-linejoin="round"/>
<polygon points="484.5,322.8 492.8,327.5 487.8,331.1 479.5,326.4" fill="#3a78a4" stroke="#0a1620" stroke-width="0.6" stroke-linejoin="round"/>
<polygon points="492.8,327.5 487.8,331.1 488.3,329.1 492.2,326.2" fill="#3a7cab" stroke="#0a1620" stroke-width="0.5" stroke-linejoin="round"/>
<polygon points="479.5,326.4 487.8,331.1 488.3,329.1 480.6,324.7" fill="#3d82ae" stroke="#0a1620" stroke-width="0.5" stroke-linejoin="round"/>
<polygon points="484.6,321.8 492.2,326.2 488.3,329.1 480.6,324.7" fill="#66cbfb" stroke="#0a1620" stroke-width="0.55" stroke-linejoin="round"/>
<polygon points="494.2,328.2 502.5,333.0 497.5,336.6 489.2,331.9" fill="#3a78a4" stroke="#0a1620" stroke-width="0.6" stroke-linejoin="round"/>
<polygon points="502.5,333.0 497.5,336.6 498.0,334.5 501.9,331.7" fill="#3a7cab" stroke="#0a1620" stroke-width="0.5" stroke-linejoin="round"/>
<polygon points="489.2,331.9 497.5,336.6 498.0,334.5 490.3,330.2" fill="#3d82ae" stroke="#0a1620" stroke-width="0.5" stroke-linejoin="round"/>
<polygon points="494.3,327.3 501.9,331.7 498.0,334.5 490.3,330.2" fill="#66cbfb" stroke="#0a1620" stroke-width="0.55" stroke-linejoin="round"/>
<polygon points="503.8,333.7 512.2,338.4 507.2,342.1 498.9,337.4" fill="#3a78a4" stroke="#0a1620" stroke-width="0.6" stroke-linejoin="round"/>
<polygon points="512.2,338.4 507.2,342.1 507.7,340.0 511.6,337.1" fill="#3a7cab" stroke="#0a1620" stroke-width="0.5" stroke-linejoin="round"/>
<polygon points="498.9,337.4 507.2,342.1 507.7,340.0 500.0,335.7" fill="#3d82ae" stroke="#0a1620" stroke-width="0.5" stroke-linejoin="round"/>
<polygon points="503.9,332.8 511.6,337.1 507.7,340.0 500.0,335.7" fill="#66cbfb" stroke="#0a1620" stroke-width="0.55" stroke-linejoin="round"/>
<polygon points="513.5,339.2 521.9,343.9 516.9,347.6 508.6,342.8" fill="#3a78a4" stroke="#0a1620" stroke-width="0.6" stroke-linejoin="round"/>
<polygon points="521.9,343.9 516.9,347.6 517.4,345.5 521.3,342.6" fill="#3a7cab" stroke="#0a1620" stroke-width="0.5" stroke-linejoin="round"/>
<polygon points="508.6,342.8 516.9,347.6 517.4,345.5 509.7,341.1" fill="#3d82ae" stroke="#0a1620" stroke-width="0.5" stroke-linejoin="round"/>
<polygon points="513.6,338.3 521.3,342.6 517.4,345.5 509.7,341.1" fill="#66cbfb" stroke="#0a1620" stroke-width="0.55" stroke-linejoin="round"/>
<polygon points="523.2,344.7 531.6,349.4 526.6,353.0 518.2,348.3" fill="#3a78a4" stroke="#0a1620" stroke-width="0.6" stroke-linejoin="round"/>
<polygon points="531.6,349.4 526.6,353.0 527.1,350.9 531.0,348.1" fill="#3a7cab" stroke="#0a1620" stroke-width="0.5" stroke-linejoin="round"/>
<polygon points="518.2,348.3 526.6,353.0 527.1,350.9 519.4,346.6" fill="#3d82ae" stroke="#0a1620" stroke-width="0.5" stroke-linejoin="round"/>
<polygon points="523.3,343.7 531.0,348.1 527.1,350.9 519.4,346.6" fill="#66cbfb" stroke="#0a1620" stroke-width="0.55" stroke-linejoin="round"/>
<polygon points="400.1,287.7 407.0,291.6 399.2,297.3 392.4,293.4" fill="#3a78a4" stroke="#0a1620" stroke-width="0.6" stroke-linejoin="round"/>
<polygon points="407.0,291.6 399.2,297.3 400.2,292.4 405.2,288.8" fill="#3a7cab" stroke="#0a1620" stroke-width="0.5" stroke-linejoin="round"/>
<polygon points="392.4,293.4 399.2,297.3 400.2,292.4 395.7,289.8" fill="#3d82ae" stroke="#0a1620" stroke-width="0.5" stroke-linejoin="round"/>
<polygon points="400.6,286.2 405.2,288.8 400.2,292.4 395.7,289.8" fill="#66cbfb" stroke="#0a1620" stroke-width="0.55" stroke-linejoin="round"/>
<polygon points="408.3,292.4 415.2,296.3 407.5,302.0 400.6,298.1" fill="#3a78a4" stroke="#0a1620" stroke-width="0.6" stroke-linejoin="round"/>
<polygon points="415.2,296.3 407.5,302.0 408.4,297.0 413.4,293.4" fill="#3a7cab" stroke="#0a1620" stroke-width="0.5" stroke-linejoin="round"/>
<polygon points="400.6,298.1 407.5,302.0 408.4,297.0 403.9,294.5" fill="#3d82ae" stroke="#0a1620" stroke-width="0.5" stroke-linejoin="round"/>
<polygon points="408.8,290.8 413.4,293.4 408.4,297.0 403.9,294.5" fill="#66cbfb" stroke="#0a1620" stroke-width="0.55" stroke-linejoin="round"/>
<polygon points="416.5,297.0 423.4,300.9 415.7,306.6 408.8,302.7" fill="#3a78a4" stroke="#0a1620" stroke-width="0.6" stroke-linejoin="round"/>
<polygon points="423.4,300.9 415.7,306.6 416.6,301.7 421.6,298.0" fill="#3a7cab" stroke="#0a1620" stroke-width="0.5" stroke-linejoin="round"/>
<polygon points="408.8,302.7 415.7,306.6 416.6,301.7 412.1,299.1" fill="#3d82ae" stroke="#0a1620" stroke-width="0.5" stroke-linejoin="round"/>
<polygon points="417.1,295.5 421.6,298.0 416.6,301.7 412.1,299.1" fill="#66cbfb" stroke="#0a1620" stroke-width="0.55" stroke-linejoin="round"/>
<polygon points="424.8,301.7 431.6,305.6 423.9,311.2 417.0,307.4" fill="#3a78a4" stroke="#0a1620" stroke-width="0.6" stroke-linejoin="round"/>
<polygon points="431.6,305.6 423.9,311.2 424.8,306.3 429.8,302.7" fill="#3a7cab" stroke="#0a1620" stroke-width="0.5" stroke-linejoin="round"/>
<polygon points="417.0,307.4 423.9,311.2 424.8,306.3 420.3,303.8" fill="#3d82ae" stroke="#0a1620" stroke-width="0.5" stroke-linejoin="round"/>
<polygon points="425.3,300.1 429.8,302.7 424.8,306.3 420.3,303.8" fill="#66cbfb" stroke="#0a1620" stroke-width="0.55" stroke-linejoin="round"/>
<polygon points="433.0,306.3 439.9,310.2 432.1,315.9 425.2,312.0" fill="#3a78a4" stroke="#0a1620" stroke-width="0.6" stroke-linejoin="round"/>
<polygon points="439.9,310.2 432.1,315.9 433.1,311.0 438.0,307.3" fill="#3a7cab" stroke="#0a1620" stroke-width="0.5" stroke-linejoin="round"/>
<polygon points="425.2,312.0 432.1,315.9 433.1,311.0 428.5,308.4" fill="#3d82ae" stroke="#0a1620" stroke-width="0.5" stroke-linejoin="round"/>
<polygon points="433.5,304.7 438.0,307.3 433.1,311.0 428.5,308.4" fill="#66cbfb" stroke="#0a1620" stroke-width="0.55" stroke-linejoin="round"/>
<polygon points="441.2,310.9 448.1,314.8 440.3,320.5 433.4,316.6" fill="#3a78a4" stroke="#0a1620" stroke-width="0.6" stroke-linejoin="round"/>
<polygon points="448.1,314.8 440.3,320.5 441.3,315.6 446.3,312.0" fill="#3a7cab" stroke="#0a1620" stroke-width="0.5" stroke-linejoin="round"/>
<polygon points="433.4,316.6 440.3,320.5 441.3,315.6 436.7,313.0" fill="#3d82ae" stroke="#0a1620" stroke-width="0.5" stroke-linejoin="round"/>
<polygon points="441.7,309.4 446.3,312.0 441.3,315.6 436.7,313.0" fill="#66cbfb" stroke="#0a1620" stroke-width="0.55" stroke-linejoin="round"/>
<polygon points="449.4,315.6 456.3,319.5 448.5,325.2 441.7,321.3" fill="#3a78a4" stroke="#0a1620" stroke-width="0.6" stroke-linejoin="round"/>
<polygon points="456.3,319.5 448.5,325.2 449.5,320.2 454.5,316.6" fill="#3a7cab" stroke="#0a1620" stroke-width="0.5" stroke-linejoin="round"/>
<polygon points="441.7,321.3 448.5,325.2 449.5,320.2 445.0,317.7" fill="#3d82ae" stroke="#0a1620" stroke-width="0.5" stroke-linejoin="round"/>
<polygon points="449.9,314.0 454.5,316.6 449.5,320.2 445.0,317.7" fill="#66cbfb" stroke="#0a1620" stroke-width="0.55" stroke-linejoin="round"/>
<polygon points="457.6,320.2 464.5,324.1 456.8,329.8 449.9,325.9" fill="#3a78a4" stroke="#0a1620" stroke-width="0.6" stroke-linejoin="round"/>
<polygon points="464.5,324.1 456.8,329.8 457.7,324.9 462.7,321.2" fill="#3a7cab" stroke="#0a1620" stroke-width="0.5" stroke-linejoin="round"/>
<polygon points="449.9,325.9 456.8,329.8 457.7,324.9 453.2,322.3" fill="#3d82ae" stroke="#0a1620" stroke-width="0.5" stroke-linejoin="round"/>
<polygon points="458.1,318.7 462.7,321.2 457.7,324.9 453.2,322.3" fill="#66cbfb" stroke="#0a1620" stroke-width="0.55" stroke-linejoin="round"/>
<polygon points="465.8,324.9 472.7,328.8 465.0,334.4 458.1,330.6" fill="#3a78a4" stroke="#0a1620" stroke-width="0.6" stroke-linejoin="round"/>
<polygon points="472.7,328.8 465.0,334.4 465.9,329.5 470.9,325.9" fill="#3a7cab" stroke="#0a1620" stroke-width="0.5" stroke-linejoin="round"/>
<polygon points="458.1,330.6 465.0,334.4 465.9,329.5 461.4,327.0" fill="#3d82ae" stroke="#0a1620" stroke-width="0.5" stroke-linejoin="round"/>
<polygon points="466.4,323.3 470.9,325.9 465.9,329.5 461.4,327.0" fill="#66cbfb" stroke="#0a1620" stroke-width="0.55" stroke-linejoin="round"/>
<polygon points="474.1,329.5 480.9,333.4 473.2,339.1 466.3,335.2" fill="#3a78a4" stroke="#0a1620" stroke-width="0.6" stroke-linejoin="round"/>
<polygon points="480.9,333.4 473.2,339.1 474.1,334.2 479.1,330.5" fill="#3a7cab" stroke="#0a1620" stroke-width="0.5" stroke-linejoin="round"/>
<polygon points="466.3,335.2 473.2,339.1 474.1,334.2 469.6,331.6" fill="#3d82ae" stroke="#0a1620" stroke-width="0.5" stroke-linejoin="round"/>
<polygon points="474.6,327.9 479.1,330.5 474.1,334.2 469.6,331.6" fill="#66cbfb" stroke="#0a1620" stroke-width="0.55" stroke-linejoin="round"/>
<polygon points="482.3,334.1 489.2,338.0 481.4,343.7 474.5,339.8" fill="#3a78a4" stroke="#0a1620" stroke-width="0.6" stroke-linejoin="round"/>
<polygon points="489.2,338.0 481.4,343.7 482.4,338.8 487.3,335.1" fill="#3a7cab" stroke="#0a1620" stroke-width="0.5" stroke-linejoin="round"/>
<polygon points="474.5,339.8 481.4,343.7 482.4,338.8 477.8,336.2" fill="#3d82ae" stroke="#0a1620" stroke-width="0.5" stroke-linejoin="round"/>
<polygon points="482.8,332.6 487.3,335.1 482.4,338.8 477.8,336.2" fill="#66cbfb" stroke="#0a1620" stroke-width="0.55" stroke-linejoin="round"/>
<polygon points="490.5,338.8 497.4,342.7 489.6,348.4 482.7,344.5" fill="#3a78a4" stroke="#0a1620" stroke-width="0.6" stroke-linejoin="round"/>
<polygon points="497.4,342.7 489.6,348.4 490.6,343.4 495.6,339.8" fill="#3a7cab" stroke="#0a1620" stroke-width="0.5" stroke-linejoin="round"/>
<polygon points="482.7,344.5 489.6,348.4 490.6,343.4 486.0,340.9" fill="#3d82ae" stroke="#0a1620" stroke-width="0.5" stroke-linejoin="round"/>
<polygon points="491.0,337.2 495.6,339.8 490.6,343.4 486.0,340.9" fill="#66cbfb" stroke="#0a1620" stroke-width="0.55" stroke-linejoin="round"/>
<polygon points="498.7,343.4 505.6,347.3 497.8,353.0 491.0,349.1" fill="#3a78a4" stroke="#0a1620" stroke-width="0.6" stroke-linejoin="round"/>
<polygon points="505.6,347.3 497.8,353.0 498.8,348.1 503.8,344.4" fill="#3a7cab" stroke="#0a1620" stroke-width="0.5" stroke-linejoin="round"/>
<polygon points="491.0,349.1 497.8,353.0 498.8,348.1 494.3,345.5" fill="#3d82ae" stroke="#0a1620" stroke-width="0.5" stroke-linejoin="round"/>
<polygon points="499.2,341.9 503.8,344.4 498.8,348.1 494.3,345.5" fill="#66cbfb" stroke="#0a1620" stroke-width="0.55" stroke-linejoin="round"/>
<polygon points="506.9,348.1 513.8,351.9 506.1,357.6 499.2,353.7" fill="#3a78a4" stroke="#0a1620" stroke-width="0.6" stroke-linejoin="round"/>
<polygon points="513.8,351.9 506.1,357.6 507.0,352.7 512.0,349.1" fill="#3a7cab" stroke="#0a1620" stroke-width="0.5" stroke-linejoin="round"/>
<polygon points="499.2,353.7 506.1,357.6 507.0,352.7 502.5,350.2" fill="#3d82ae" stroke="#0a1620" stroke-width="0.5" stroke-linejoin="round"/>
<polygon points="507.4,346.5 512.0,349.1 507.0,352.7 502.5,350.2" fill="#66cbfb" stroke="#0a1620" stroke-width="0.55" stroke-linejoin="round"/>
<polygon points="515.1,352.7 522.0,356.6 514.3,362.3 507.4,358.4" fill="#3a78a4" stroke="#0a1620" stroke-width="0.6" stroke-linejoin="round"/>
<polygon points="522.0,356.6 514.3,362.3 515.2,357.4 520.2,353.7" fill="#3a7cab" stroke="#0a1620" stroke-width="0.5" stroke-linejoin="round"/>
<polygon points="507.4,358.4 514.3,362.3 515.2,357.4 510.7,354.8" fill="#3d82ae" stroke="#0a1620" stroke-width="0.5" stroke-linejoin="round"/>
<polygon points="515.7,351.1 520.2,353.7 515.2,357.4 510.7,354.8" fill="#66cbfb" stroke="#0a1620" stroke-width="0.55" stroke-linejoin="round"/>
<polygon points="391.1,294.4 402.0,300.6 394.3,306.3 383.3,300.1" fill="#3a78a4" stroke="#0a1620" stroke-width="0.6" stroke-linejoin="round"/>
<polygon points="402.0,300.6 394.3,306.3 395.2,301.4 400.2,297.7" fill="#3a7cab" stroke="#0a1620" stroke-width="0.5" stroke-linejoin="round"/>
<polygon points="383.3,300.1 394.3,306.3 395.2,301.4 386.6,296.5" fill="#3d82ae" stroke="#0a1620" stroke-width="0.5" stroke-linejoin="round"/>
<polygon points="391.6,292.8 400.2,297.7 395.2,301.4 386.6,296.5" fill="#66cbfb" stroke="#0a1620" stroke-width="0.55" stroke-linejoin="round"/>
<polygon points="403.4,301.4 410.3,305.2 402.5,310.9 395.6,307.0" fill="#3a78a4" stroke="#0a1620" stroke-width="0.6" stroke-linejoin="round"/>
<polygon points="410.3,305.2 402.5,310.9 403.5,306.0 408.4,302.4" fill="#3a7cab" stroke="#0a1620" stroke-width="0.5" stroke-linejoin="round"/>
<polygon points="395.6,307.0 402.5,310.9 403.5,306.0 398.9,303.4" fill="#3d82ae" stroke="#0a1620" stroke-width="0.5" stroke-linejoin="round"/>
<polygon points="403.9,299.8 408.4,302.4 403.5,306.0 398.9,303.4" fill="#66cbfb" stroke="#0a1620" stroke-width="0.55" stroke-linejoin="round"/>
<polygon points="411.6,306.0 418.5,309.9 410.7,315.6 403.8,311.7" fill="#3a78a4" stroke="#0a1620" stroke-width="0.6" stroke-linejoin="round"/>
<polygon points="418.5,309.9 410.7,315.6 411.7,310.6 416.7,307.0" fill="#3a7cab" stroke="#0a1620" stroke-width="0.5" stroke-linejoin="round"/>
<polygon points="403.8,311.7 410.7,315.6 411.7,310.6 407.1,308.1" fill="#3d82ae" stroke="#0a1620" stroke-width="0.5" stroke-linejoin="round"/>
<polygon points="412.1,304.4 416.7,307.0 411.7,310.6 407.1,308.1" fill="#66cbfb" stroke="#0a1620" stroke-width="0.55" stroke-linejoin="round"/>
<polygon points="419.8,310.6 426.7,314.5 418.9,320.2 412.1,316.3" fill="#3a78a4" stroke="#0a1620" stroke-width="0.6" stroke-linejoin="round"/>
<polygon points="426.7,314.5 418.9,320.2 419.9,315.3 424.9,311.6" fill="#3a7cab" stroke="#0a1620" stroke-width="0.5" stroke-linejoin="round"/>
<polygon points="412.1,316.3 418.9,320.2 419.9,315.3 415.4,312.7" fill="#3d82ae" stroke="#0a1620" stroke-width="0.5" stroke-linejoin="round"/>
<polygon points="420.3,309.1 424.9,311.6 419.9,315.3 415.4,312.7" fill="#66cbfb" stroke="#0a1620" stroke-width="0.55" stroke-linejoin="round"/>
<polygon points="428.0,315.3 434.9,319.2 427.2,324.8 420.3,321.0" fill="#3a78a4" stroke="#0a1620" stroke-width="0.6" stroke-linejoin="round"/>
<polygon points="434.9,319.2 427.2,324.8 428.1,319.9 433.1,316.3" fill="#3a7cab" stroke="#0a1620" stroke-width="0.5" stroke-linejoin="round"/>
<polygon points="420.3,321.0 427.2,324.8 428.1,319.9 423.6,317.4" fill="#3d82ae" stroke="#0a1620" stroke-width="0.5" stroke-linejoin="round"/>
<polygon points="428.5,313.7 433.1,316.3 428.1,319.9 423.6,317.4" fill="#66cbfb" stroke="#0a1620" stroke-width="0.55" stroke-linejoin="round"/>
<polygon points="436.2,319.9 443.1,323.8 435.4,329.5 428.5,325.6" fill="#3a78a4" stroke="#0a1620" stroke-width="0.6" stroke-linejoin="round"/>
<polygon points="443.1,323.8 435.4,329.5 436.3,324.6 441.3,320.9" fill="#3a7cab" stroke="#0a1620" stroke-width="0.5" stroke-linejoin="round"/>
<polygon points="428.5,325.6 435.4,329.5 436.3,324.6 431.8,322.0" fill="#3d82ae" stroke="#0a1620" stroke-width="0.5" stroke-linejoin="round"/>
<polygon points="436.8,318.3 441.3,320.9 436.3,324.6 431.8,322.0" fill="#66cbfb" stroke="#0a1620" stroke-width="0.55" stroke-linejoin="round"/>
<polygon points="444.5,324.5 451.3,328.4 443.6,334.1 436.7,330.2" fill="#3a78a4" stroke="#0a1620" stroke-width="0.6" stroke-linejoin="round"/>
<polygon points="451.3,328.4 443.6,334.1 444.5,329.2 449.5,325.6" fill="#3a7cab" stroke="#0a1620" stroke-width="0.5" stroke-linejoin="round"/>
<polygon points="436.7,330.2 443.6,334.1 444.5,329.2 440.0,326.6" fill="#3d82ae" stroke="#0a1620" stroke-width="0.5" stroke-linejoin="round"/>
<polygon points="445.0,323.0 449.5,325.6 444.5,329.2 440.0,326.6" fill="#66cbfb" stroke="#0a1620" stroke-width="0.55" stroke-linejoin="round"/>
<polygon points="452.7,329.2 459.6,333.1 451.8,338.8 444.9,334.9" fill="#3a78a4" stroke="#0a1620" stroke-width="0.6" stroke-linejoin="round"/>
<polygon points="459.6,333.1 451.8,338.8 452.8,333.8 457.7,330.2" fill="#3a7cab" stroke="#0a1620" stroke-width="0.5" stroke-linejoin="round"/>
<polygon points="444.9,334.9 451.8,338.8 452.8,333.8 448.2,331.3" fill="#3d82ae" stroke="#0a1620" stroke-width="0.5" stroke-linejoin="round"/>
<polygon points="453.2,327.6 457.7,330.2 452.8,333.8 448.2,331.3" fill="#66cbfb" stroke="#0a1620" stroke-width="0.55" stroke-linejoin="round"/>
<polygon points="460.9,333.8 467.8,337.7 460.0,343.4 453.1,339.5" fill="#3a78a4" stroke="#0a1620" stroke-width="0.6" stroke-linejoin="round"/>
<polygon points="467.8,337.7 460.0,343.4 461.0,338.5 466.0,334.8" fill="#3a7cab" stroke="#0a1620" stroke-width="0.5" stroke-linejoin="round"/>
<polygon points="453.1,339.5 460.0,343.4 461.0,338.5 456.4,335.9" fill="#3d82ae" stroke="#0a1620" stroke-width="0.5" stroke-linejoin="round"/>
<polygon points="461.4,332.3 466.0,334.8 461.0,338.5 456.4,335.9" fill="#66cbfb" stroke="#0a1620" stroke-width="0.55" stroke-linejoin="round"/>
<polygon points="469.1,338.5 476.0,342.4 468.2,348.0 461.4,344.2" fill="#3a78a4" stroke="#0a1620" stroke-width="0.6" stroke-linejoin="round"/>
<polygon points="476.0,342.4 468.2,348.0 469.2,343.1 474.2,339.5" fill="#3a7cab" stroke="#0a1620" stroke-width="0.5" stroke-linejoin="round"/>
<polygon points="461.4,344.2 468.2,348.0 469.2,343.1 464.7,340.6" fill="#3d82ae" stroke="#0a1620" stroke-width="0.5" stroke-linejoin="round"/>
<polygon points="469.6,336.9 474.2,339.5 469.2,343.1 464.7,340.6" fill="#66cbfb" stroke="#0a1620" stroke-width="0.55" stroke-linejoin="round"/>
<polygon points="477.3,343.1 484.2,347.0 476.5,352.7 469.6,348.8" fill="#3a78a4" stroke="#0a1620" stroke-width="0.6" stroke-linejoin="round"/>
<polygon points="484.2,347.0 476.5,352.7 477.4,347.8 482.4,344.1" fill="#3a7cab" stroke="#0a1620" stroke-width="0.5" stroke-linejoin="round"/>
<polygon points="469.6,348.8 476.5,352.7 477.4,347.8 472.9,345.2" fill="#3d82ae" stroke="#0a1620" stroke-width="0.5" stroke-linejoin="round"/>
<polygon points="477.8,341.5 482.4,344.1 477.4,347.8 472.9,345.2" fill="#66cbfb" stroke="#0a1620" stroke-width="0.55" stroke-linejoin="round"/>
<polygon points="485.5,347.7 492.4,351.6 484.7,357.3 477.8,353.4" fill="#3a78a4" stroke="#0a1620" stroke-width="0.6" stroke-linejoin="round"/>
<polygon points="492.4,351.6 484.7,357.3 485.6,352.4 490.6,348.8" fill="#3a7cab" stroke="#0a1620" stroke-width="0.5" stroke-linejoin="round"/>
<polygon points="477.8,353.4 484.7,357.3 485.6,352.4 481.1,349.8" fill="#3d82ae" stroke="#0a1620" stroke-width="0.5" stroke-linejoin="round"/>
<polygon points="486.1,346.2 490.6,348.8 485.6,352.4 481.1,349.8" fill="#66cbfb" stroke="#0a1620" stroke-width="0.55" stroke-linejoin="round"/>
<polygon points="493.8,352.4 500.6,356.3 492.9,362.0 486.0,358.1" fill="#3a78a4" stroke="#0a1620" stroke-width="0.6" stroke-linejoin="round"/>
<polygon points="500.6,356.3 492.9,362.0 493.8,357.0 498.8,353.4" fill="#3a7cab" stroke="#0a1620" stroke-width="0.5" stroke-linejoin="round"/>
<polygon points="486.0,358.1 492.9,362.0 493.8,357.0 489.3,354.5" fill="#3d82ae" stroke="#0a1620" stroke-width="0.5" stroke-linejoin="round"/>
<polygon points="494.3,350.8 498.8,353.4 493.8,357.0 489.3,354.5" fill="#66cbfb" stroke="#0a1620" stroke-width="0.55" stroke-linejoin="round"/>
<polygon points="502.0,357.0 508.9,360.9 501.1,366.6 494.2,362.7" fill="#3a78a4" stroke="#0a1620" stroke-width="0.6" stroke-linejoin="round"/>
<polygon points="508.9,360.9 501.1,366.6 502.1,361.7 507.0,358.0" fill="#3a7cab" stroke="#0a1620" stroke-width="0.5" stroke-linejoin="round"/>
<polygon points="494.2,362.7 501.1,366.6 502.1,361.7 497.5,359.1" fill="#3d82ae" stroke="#0a1620" stroke-width="0.5" stroke-linejoin="round"/>
<polygon points="502.5,355.5 507.0,358.0 502.1,361.7 497.5,359.1" fill="#66cbfb" stroke="#0a1620" stroke-width="0.55" stroke-linejoin="round"/>
<polygon points="382.0,301.0 395.0,308.4 387.3,314.1 374.2,306.7" fill="#3a78a4" stroke="#0a1620" stroke-width="0.6" stroke-linejoin="round"/>
<polygon points="395.0,308.4 387.3,314.1 388.2,309.2 393.2,305.5" fill="#3a7cab" stroke="#0a1620" stroke-width="0.5" stroke-linejoin="round"/>
<polygon points="374.2,306.7 387.3,314.1 388.2,309.2 377.5,303.1" fill="#3d82ae" stroke="#0a1620" stroke-width="0.5" stroke-linejoin="round"/>
<polygon points="382.5,299.5 393.2,305.5 388.2,309.2 377.5,303.1" fill="#66cbfb" stroke="#0a1620" stroke-width="0.55" stroke-linejoin="round"/>
<polygon points="396.4,309.2 403.3,313.0 395.5,318.7 388.6,314.8" fill="#3a78a4" stroke="#0a1620" stroke-width="0.6" stroke-linejoin="round"/>
<polygon points="403.3,313.0 395.5,318.7 396.5,313.8 401.4,310.2" fill="#3a7cab" stroke="#0a1620" stroke-width="0.5" stroke-linejoin="round"/>
<polygon points="388.6,314.8 395.5,318.7 396.5,313.8 391.9,311.2" fill="#3d82ae" stroke="#0a1620" stroke-width="0.5" stroke-linejoin="round"/>
<polygon points="396.9,307.6 401.4,310.2 396.5,313.8 391.9,311.2" fill="#66cbfb" stroke="#0a1620" stroke-width="0.55" stroke-linejoin="round"/>
<polygon points="404.6,313.8 411.5,317.7 403.7,323.4 396.8,319.5" fill="#3a78a4" stroke="#0a1620" stroke-width="0.6" stroke-linejoin="round"/>
<polygon points="411.5,317.7 403.7,323.4 404.7,318.4 409.7,314.8" fill="#3a7cab" stroke="#0a1620" stroke-width="0.5" stroke-linejoin="round"/>
<polygon points="396.8,319.5 403.7,323.4 404.7,318.4 400.1,315.9" fill="#3d82ae" stroke="#0a1620" stroke-width="0.5" stroke-linejoin="round"/>
<polygon points="405.1,312.2 409.7,314.8 404.7,318.4 400.1,315.9" fill="#66cbfb" stroke="#0a1620" stroke-width="0.55" stroke-linejoin="round"/>
<polygon points="412.8,318.4 419.7,322.3 411.9,328.0 405.1,324.1" fill="#3a78a4" stroke="#0a1620" stroke-width="0.6" stroke-linejoin="round"/>
<polygon points="419.7,322.3 411.9,328.0 412.9,323.1 417.9,319.4" fill="#3a7cab" stroke="#0a1620" stroke-width="0.5" stroke-linejoin="round"/>
<polygon points="405.1,324.1 411.9,328.0 412.9,323.1 408.4,320.5" fill="#3d82ae" stroke="#0a1620" stroke-width="0.5" stroke-linejoin="round"/>
<polygon points="413.3,316.9 417.9,319.4 412.9,323.1 408.4,320.5" fill="#66cbfb" stroke="#0a1620" stroke-width="0.55" stroke-linejoin="round"/>
<polygon points="421.0,323.1 427.9,327.0 420.2,332.6 413.3,328.8" fill="#3a78a4" stroke="#0a1620" stroke-width="0.6" stroke-linejoin="round"/>
<polygon points="427.9,327.0 420.2,332.6 421.1,327.7 426.1,324.1" fill="#3a7cab" stroke="#0a1620" stroke-width="0.5" stroke-linejoin="round"/>
<polygon points="413.3,328.8 420.2,332.6 421.1,327.7 416.6,325.2" fill="#3d82ae" stroke="#0a1620" stroke-width="0.5" stroke-linejoin="round"/>
<polygon points="421.5,321.5 426.1,324.1 421.1,327.7 416.6,325.2" fill="#66cbfb" stroke="#0a1620" stroke-width="0.55" stroke-linejoin="round"/>
<polygon points="429.2,327.7 436.1,331.6 428.4,337.3 421.5,333.4" fill="#3a78a4" stroke="#0a1620" stroke-width="0.6" stroke-linejoin="round"/>
<polygon points="436.1,331.6 428.4,337.3 429.3,332.4 434.3,328.7" fill="#3a7cab" stroke="#0a1620" stroke-width="0.5" stroke-linejoin="round"/>
<polygon points="421.5,333.4 428.4,337.3 429.3,332.4 424.8,329.8" fill="#3d82ae" stroke="#0a1620" stroke-width="0.5" stroke-linejoin="round"/>
<polygon points="429.8,326.2 434.3,328.7 429.3,332.4 424.8,329.8" fill="#66cbfb" stroke="#0a1620" stroke-width="0.55" stroke-linejoin="round"/>
<polygon points="437.5,332.4 444.3,336.2 436.6,341.9 429.7,338.0" fill="#3a78a4" stroke="#0a1620" stroke-width="0.6" stroke-linejoin="round"/>
<polygon points="444.3,336.2 436.6,341.9 437.5,337.0 442.5,333.4" fill="#3a7cab" stroke="#0a1620" stroke-width="0.5" stroke-linejoin="round"/>
<polygon points="429.7,338.0 436.6,341.9 437.5,337.0 433.0,334.4" fill="#3d82ae" stroke="#0a1620" stroke-width="0.5" stroke-linejoin="round"/>
<polygon points="438.0,330.8 442.5,333.4 437.5,337.0 433.0,334.4" fill="#66cbfb" stroke="#0a1620" stroke-width="0.55" stroke-linejoin="round"/>
<polygon points="445.7,337.0 452.6,340.9 444.8,346.6 437.9,342.7" fill="#3a78a4" stroke="#0a1620" stroke-width="0.6" stroke-linejoin="round"/>
<polygon points="452.6,340.9 444.8,346.6 445.8,341.6 450.7,338.0" fill="#3a7cab" stroke="#0a1620" stroke-width="0.5" stroke-linejoin="round"/>
<polygon points="437.9,342.7 444.8,346.6 445.8,341.6 441.2,339.1" fill="#3d82ae" stroke="#0a1620" stroke-width="0.5" stroke-linejoin="round"/>
<polygon points="446.2,335.4 450.7,338.0 445.8,341.6 441.2,339.1" fill="#66cbfb" stroke="#0a1620" stroke-width="0.55" stroke-linejoin="round"/>
<polygon points="453.9,341.6 460.8,345.5 453.0,351.2 446.1,347.3" fill="#3a78a4" stroke="#0a1620" stroke-width="0.6" stroke-linejoin="round"/>
<polygon points="460.8,345.5 453.0,351.2 454.0,346.3 459.0,342.6" fill="#3a7cab" stroke="#0a1620" stroke-width="0.5" stroke-linejoin="round"/>
<polygon points="446.1,347.3 453.0,351.2 454.0,346.3 449.4,343.7" fill="#3d82ae" stroke="#0a1620" stroke-width="0.5" stroke-linejoin="round"/>
<polygon points="454.4,340.1 459.0,342.6 454.0,346.3 449.4,343.7" fill="#66cbfb" stroke="#0a1620" stroke-width="0.55" stroke-linejoin="round"/>
<polygon points="462.1,346.3 469.0,350.2 461.2,355.8 454.4,352.0" fill="#3a78a4" stroke="#0a1620" stroke-width="0.6" stroke-linejoin="round"/>
<polygon points="469.0,350.2 461.2,355.8 462.2,350.9 467.2,347.3" fill="#3a7cab" stroke="#0a1620" stroke-width="0.5" stroke-linejoin="round"/>
<polygon points="454.4,352.0 461.2,355.8 462.2,350.9 457.7,348.4" fill="#3d82ae" stroke="#0a1620" stroke-width="0.5" stroke-linejoin="round"/>
<polygon points="462.6,344.7 467.2,347.3 462.2,350.9 457.7,348.4" fill="#66cbfb" stroke="#0a1620" stroke-width="0.55" stroke-linejoin="round"/>
<polygon points="470.3,350.9 477.2,354.8 469.5,360.5 462.6,356.6" fill="#3a78a4" stroke="#0a1620" stroke-width="0.6" stroke-linejoin="round"/>
<polygon points="477.2,354.8 469.5,360.5 470.4,355.6 475.4,351.9" fill="#3a7cab" stroke="#0a1620" stroke-width="0.5" stroke-linejoin="round"/>
<polygon points="462.6,356.6 469.5,360.5 470.4,355.6 465.9,353.0" fill="#3d82ae" stroke="#0a1620" stroke-width="0.5" stroke-linejoin="round"/>
<polygon points="470.8,349.3 475.4,351.9 470.4,355.6 465.9,353.0" fill="#66cbfb" stroke="#0a1620" stroke-width="0.55" stroke-linejoin="round"/>
<polygon points="478.5,355.6 485.4,359.4 477.7,365.1 470.8,361.2" fill="#3a78a4" stroke="#0a1620" stroke-width="0.6" stroke-linejoin="round"/>
<polygon points="485.4,359.4 477.7,365.1 478.6,360.2 483.6,356.6" fill="#3a7cab" stroke="#0a1620" stroke-width="0.5" stroke-linejoin="round"/>
<polygon points="470.8,361.2 477.7,365.1 478.6,360.2 474.1,357.6" fill="#3d82ae" stroke="#0a1620" stroke-width="0.5" stroke-linejoin="round"/>
<polygon points="479.1,354.0 483.6,356.6 478.6,360.2 474.1,357.6" fill="#66cbfb" stroke="#0a1620" stroke-width="0.55" stroke-linejoin="round"/>
<polygon points="486.8,360.2 493.6,364.1 485.9,369.8 479.0,365.9" fill="#3a78a4" stroke="#0a1620" stroke-width="0.6" stroke-linejoin="round"/>
<polygon points="493.6,364.1 485.9,369.8 486.8,364.8 491.8,361.2" fill="#3a7cab" stroke="#0a1620" stroke-width="0.5" stroke-linejoin="round"/>
<polygon points="479.0,365.9 485.9,369.8 486.8,364.8 482.3,362.3" fill="#3d82ae" stroke="#0a1620" stroke-width="0.5" stroke-linejoin="round"/>
<polygon points="487.3,358.6 491.8,361.2 486.8,364.8 482.3,362.3" fill="#66cbfb" stroke="#0a1620" stroke-width="0.55" stroke-linejoin="round"/>
<polygon points="495.0,364.8 503.9,369.9 496.2,375.6 487.2,370.5" fill="#3a78a4" stroke="#0a1620" stroke-width="0.6" stroke-linejoin="round"/>
<polygon points="503.9,369.9 496.2,375.6 497.1,370.6 502.1,367.0" fill="#3a7cab" stroke="#0a1620" stroke-width="0.5" stroke-linejoin="round"/>
<polygon points="487.2,370.5 496.2,375.6 497.1,370.6 490.5,366.9" fill="#3d82ae" stroke="#0a1620" stroke-width="0.5" stroke-linejoin="round"/>
<polygon points="495.5,363.3 502.1,367.0 497.1,370.6 490.5,366.9" fill="#66cbfb" stroke="#0a1620" stroke-width="0.55" stroke-linejoin="round"/>
<polygon points="372.9,307.7 390.1,317.4 382.3,323.0 365.2,313.4" fill="#3a78a4" stroke="#0a1620" stroke-width="0.6" stroke-linejoin="round"/>
<polygon points="390.1,317.4 382.3,323.0 383.3,318.1 388.3,314.5" fill="#3a7cab" stroke="#0a1620" stroke-width="0.5" stroke-linejoin="round"/>
<polygon points="365.2,313.4 382.3,323.0 383.3,318.1 368.5,309.8" fill="#3d82ae" stroke="#0a1620" stroke-width="0.5" stroke-linejoin="round"/>
<polygon points="373.5,306.1 388.3,314.5 383.3,318.1 368.5,309.8" fill="#66cbfb" stroke="#0a1620" stroke-width="0.55" stroke-linejoin="round"/>
<polygon points="391.4,318.1 398.3,322.0 390.6,327.7 383.7,323.8" fill="#3a78a4" stroke="#0a1620" stroke-width="0.6" stroke-linejoin="round"/>
<polygon points="398.3,322.0 390.6,327.7 391.5,322.8 396.5,319.1" fill="#3a7cab" stroke="#0a1620" stroke-width="0.5" stroke-linejoin="round"/>
<polygon points="383.7,323.8 390.6,327.7 391.5,322.8 387.0,320.2" fill="#3d82ae" stroke="#0a1620" stroke-width="0.5" stroke-linejoin="round"/>
<polygon points="391.9,316.6 396.5,319.1 391.5,322.8 387.0,320.2" fill="#66cbfb" stroke="#0a1620" stroke-width="0.55" stroke-linejoin="round"/>
<polygon points="399.6,322.8 406.5,326.6 398.8,332.3 391.9,328.4" fill="#3a78a4" stroke="#0a1620" stroke-width="0.6" stroke-linejoin="round"/>
<polygon points="406.5,326.6 398.8,332.3 399.7,327.4 404.7,323.8" fill="#3a7cab" stroke="#0a1620" stroke-width="0.5" stroke-linejoin="round"/>
<polygon points="391.9,328.4 398.8,332.3 399.7,327.4 395.2,324.8" fill="#3d82ae" stroke="#0a1620" stroke-width="0.5" stroke-linejoin="round"/>
<polygon points="400.2,321.2 404.7,323.8 399.7,327.4 395.2,324.8" fill="#66cbfb" stroke="#0a1620" stroke-width="0.55" stroke-linejoin="round"/>
<polygon points="407.9,327.4 414.7,331.3 407.0,337.0 400.1,333.1" fill="#3a78a4" stroke="#0a1620" stroke-width="0.6" stroke-linejoin="round"/>
<polygon points="414.7,331.3 407.0,337.0 407.9,332.1 412.9,328.4" fill="#3a7cab" stroke="#0a1620" stroke-width="0.5" stroke-linejoin="round"/>
<polygon points="400.1,333.1 407.0,337.0 407.9,332.1 403.4,329.5" fill="#3d82ae" stroke="#0a1620" stroke-width="0.5" stroke-linejoin="round"/>
<polygon points="408.4,325.8 412.9,328.4 407.9,332.1 403.4,329.5" fill="#66cbfb" stroke="#0a1620" stroke-width="0.55" stroke-linejoin="round"/>
<polygon points="416.1,332.0 423.0,335.9 415.2,341.6 408.3,337.7" fill="#3a78a4" stroke="#0a1620" stroke-width="0.6" stroke-linejoin="round"/>
<polygon points="423.0,335.9 415.2,341.6 416.2,336.7 421.1,333.0" fill="#3a7cab" stroke="#0a1620" stroke-width="0.5" stroke-linejoin="round"/>
<polygon points="408.3,337.7 415.2,341.6 416.2,336.7 411.6,334.1" fill="#3d82ae" stroke="#0a1620" stroke-width="0.5" stroke-linejoin="round"/>
<polygon points="416.6,330.5 421.1,333.0 416.2,336.7 411.6,334.1" fill="#66cbfb" stroke="#0a1620" stroke-width="0.55" stroke-linejoin="round"/>
<polygon points="424.3,336.7 431.2,340.6 423.4,346.2 416.5,342.4" fill="#3a78a4" stroke="#0a1620" stroke-width="0.6" stroke-linejoin="round"/>
<polygon points="431.2,340.6 423.4,346.2 424.4,341.3 429.4,337.7" fill="#3a7cab" stroke="#0a1620" stroke-width="0.5" stroke-linejoin="round"/>
<polygon points="416.5,342.4 423.4,346.2 424.4,341.3 419.8,338.8" fill="#3d82ae" stroke="#0a1620" stroke-width="0.5" stroke-linejoin="round"/>
<polygon points="424.8,335.1 429.4,337.7 424.4,341.3 419.8,338.8" fill="#66cbfb" stroke="#0a1620" stroke-width="0.55" stroke-linejoin="round"/>
<polygon points="432.5,341.3 439.4,345.2 431.6,350.9 424.8,347.0" fill="#3a78a4" stroke="#0a1620" stroke-width="0.6" stroke-linejoin="round"/>
<polygon points="439.4,345.2 431.6,350.9 432.6,346.0 437.6,342.3" fill="#3a7cab" stroke="#0a1620" stroke-width="0.5" stroke-linejoin="round"/>
<polygon points="424.8,347.0 431.6,350.9 432.6,346.0 428.1,343.4" fill="#3d82ae" stroke="#0a1620" stroke-width="0.5" stroke-linejoin="round"/>
<polygon points="433.0,339.8 437.6,342.3 432.6,346.0 428.1,343.4" fill="#66cbfb" stroke="#0a1620" stroke-width="0.55" stroke-linejoin="round"/>
<polygon points="440.7,346.0 447.6,349.8 439.9,355.5 433.0,351.6" fill="#3a78a4" stroke="#0a1620" stroke-width="0.6" stroke-linejoin="round"/>
<polygon points="447.6,349.8 439.9,355.5 440.8,350.6 445.8,347.0" fill="#3a7cab" stroke="#0a1620" stroke-width="0.5" stroke-linejoin="round"/>
<polygon points="433.0,351.6 439.9,355.5 440.8,350.6 436.3,348.0" fill="#3d82ae" stroke="#0a1620" stroke-width="0.5" stroke-linejoin="round"/>
<polygon points="441.2,344.4 445.8,347.0 440.8,350.6 436.3,348.0" fill="#66cbfb" stroke="#0a1620" stroke-width="0.55" stroke-linejoin="round"/>
<polygon points="448.9,350.6 455.8,354.5 448.1,360.2 441.2,356.3" fill="#3a78a4" stroke="#0a1620" stroke-width="0.6" stroke-linejoin="round"/>
<polygon points="455.8,354.5 448.1,360.2 449.0,355.2 454.0,351.6" fill="#3a7cab" stroke="#0a1620" stroke-width="0.5" stroke-linejoin="round"/>
<polygon points="441.2,356.3 448.1,360.2 449.0,355.2 444.5,352.7" fill="#3d82ae" stroke="#0a1620" stroke-width="0.5" stroke-linejoin="round"/>
<polygon points="449.5,349.0 454.0,351.6 449.0,355.2 444.5,352.7" fill="#66cbfb" stroke="#0a1620" stroke-width="0.55" stroke-linejoin="round"/>
<polygon points="457.2,355.2 464.0,359.1 456.3,364.8 449.4,360.9" fill="#3a78a4" stroke="#0a1620" stroke-width="0.6" stroke-linejoin="round"/>
<polygon points="464.0,359.1 456.3,364.8 457.2,359.9 462.2,356.2" fill="#3a7cab" stroke="#0a1620" stroke-width="0.5" stroke-linejoin="round"/>
<polygon points="449.4,360.9 456.3,364.8 457.2,359.9 452.7,357.3" fill="#3d82ae" stroke="#0a1620" stroke-width="0.5" stroke-linejoin="round"/>
<polygon points="457.7,353.7 462.2,356.2 457.2,359.9 452.7,357.3" fill="#66cbfb" stroke="#0a1620" stroke-width="0.55" stroke-linejoin="round"/>
<polygon points="465.4,359.9 472.3,363.8 464.5,369.4 457.6,365.6" fill="#3a78a4" stroke="#0a1620" stroke-width="0.6" stroke-linejoin="round"/>
<polygon points="472.3,363.8 464.5,369.4 465.5,364.5 470.4,360.9" fill="#3a7cab" stroke="#0a1620" stroke-width="0.5" stroke-linejoin="round"/>
<polygon points="457.6,365.6 464.5,369.4 465.5,364.5 460.9,362.0" fill="#3d82ae" stroke="#0a1620" stroke-width="0.5" stroke-linejoin="round"/>
<polygon points="465.9,358.3 470.4,360.9 465.5,364.5 460.9,362.0" fill="#66cbfb" stroke="#0a1620" stroke-width="0.55" stroke-linejoin="round"/>
<polygon points="473.6,364.5 480.5,368.4 472.7,374.1 465.8,370.2" fill="#3a78a4" stroke="#0a1620" stroke-width="0.6" stroke-linejoin="round"/>
<polygon points="480.5,368.4 472.7,374.1 473.7,369.2 478.7,365.5" fill="#3a7cab" stroke="#0a1620" stroke-width="0.5" stroke-linejoin="round"/>
<polygon points="465.8,370.2 472.7,374.1 473.7,369.2 469.1,366.6" fill="#3d82ae" stroke="#0a1620" stroke-width="0.5" stroke-linejoin="round"/>
<polygon points="474.1,363.0 478.7,365.5 473.7,369.2 469.1,366.6" fill="#66cbfb" stroke="#0a1620" stroke-width="0.55" stroke-linejoin="round"/>
<polygon points="481.8,369.2 494.9,376.5 487.1,382.2 474.1,374.8" fill="#3a78a4" stroke="#0a1620" stroke-width="0.6" stroke-linejoin="round"/>
<polygon points="494.9,376.5 487.1,382.2 488.1,377.3 493.0,373.6" fill="#3a7cab" stroke="#0a1620" stroke-width="0.5" stroke-linejoin="round"/>
<polygon points="474.1,374.8 487.1,382.2 488.1,377.3 477.4,371.2" fill="#3d82ae" stroke="#0a1620" stroke-width="0.5" stroke-linejoin="round"/>
<polygon points="482.3,367.6 493.0,373.6 488.1,377.3 477.4,371.2" fill="#66cbfb" stroke="#0a1620" stroke-width="0.55" stroke-linejoin="round"/>
<polygon points="384.8,326.1 391.6,330.0 383.9,335.7 377.0,331.8" fill="#3a78a4" stroke="#0a1620" stroke-width="0.6" stroke-linejoin="round"/>
<polygon points="391.6,330.0 383.9,335.7 384.8,330.8 389.8,327.1" fill="#3a7cab" stroke="#0a1620" stroke-width="0.5" stroke-linejoin="round"/>
<polygon points="377.0,331.8 383.9,335.7 384.8,330.8 380.3,328.2" fill="#3d82ae" stroke="#0a1620" stroke-width="0.5" stroke-linejoin="round"/>
<polygon points="385.3,324.5 389.8,327.1 384.8,330.8 380.3,328.2" fill="#66cbfb" stroke="#0a1620" stroke-width="0.55" stroke-linejoin="round"/>
<polygon points="393.0,330.7 399.9,334.6 392.1,340.3 385.2,336.4" fill="#3a78a4" stroke="#0a1620" stroke-width="0.6" stroke-linejoin="round"/>
<polygon points="399.9,334.6 392.1,340.3 393.1,335.4 398.0,331.8" fill="#3a7cab" stroke="#0a1620" stroke-width="0.5" stroke-linejoin="round"/>
<polygon points="385.2,336.4 392.1,340.3 393.1,335.4 388.5,332.8" fill="#3d82ae" stroke="#0a1620" stroke-width="0.5" stroke-linejoin="round"/>
<polygon points="393.5,329.2 398.0,331.8 393.1,335.4 388.5,332.8" fill="#66cbfb" stroke="#0a1620" stroke-width="0.55" stroke-linejoin="round"/>
<polygon points="401.2,335.4 461.5,369.4 453.7,375.1 393.4,341.1" fill="#3a78a4" stroke="#0a1620" stroke-width="0.6" stroke-linejoin="round"/>
<polygon points="461.5,369.4 453.7,375.1 454.7,370.2 459.7,366.5" fill="#3a7cab" stroke="#0a1620" stroke-width="0.5" stroke-linejoin="round"/>
<polygon points="393.4,341.1 453.7,375.1 454.7,370.2 396.7,337.5" fill="#3d82ae" stroke="#0a1620" stroke-width="0.5" stroke-linejoin="round"/>
<polygon points="401.7,333.8 459.7,366.5 454.7,370.2 396.7,337.5" fill="#66cbfb" stroke="#0a1620" stroke-width="0.55" stroke-linejoin="round"/>
<polygon points="462.8,370.2 472.2,375.5 464.4,381.1 455.1,375.9" fill="#3a78a4" stroke="#0a1620" stroke-width="0.6" stroke-linejoin="round"/>
<polygon points="472.2,375.5 464.4,381.1 465.4,376.2 470.3,372.6" fill="#3a7cab" stroke="#0a1620" stroke-width="0.5" stroke-linejoin="round"/>
<polygon points="455.1,375.9 464.4,381.1 465.4,376.2 458.4,372.3" fill="#3d82ae" stroke="#0a1620" stroke-width="0.5" stroke-linejoin="round"/>
<polygon points="463.3,368.6 470.3,372.6 465.4,376.2 458.4,372.3" fill="#66cbfb" stroke="#0a1620" stroke-width="0.55" stroke-linejoin="round"/>
<polygon points="473.5,376.2 482.0,381.0 474.3,386.7 465.7,381.9" fill="#3a78a4" stroke="#0a1620" stroke-width="0.6" stroke-linejoin="round"/>
<polygon points="482.0,381.0 474.3,386.7 475.2,381.8 480.2,378.1" fill="#3a7cab" stroke="#0a1620" stroke-width="0.5" stroke-linejoin="round"/>
<polygon points="465.7,381.9 474.3,386.7 475.2,381.8 469.0,378.3" fill="#3d82ae" stroke="#0a1620" stroke-width="0.5" stroke-linejoin="round"/>
<polygon points="474.0,374.7 480.2,378.1 475.2,381.8 469.0,378.3" fill="#66cbfb" stroke="#0a1620" stroke-width="0.55" stroke-linejoin="round"/>
<polygon points="546.3,347.5 553.3,351.5 547.4,355.8 540.4,351.8" fill="#3a78a4" stroke="#0a1620" stroke-width="0.6" stroke-linejoin="round"/>
<polygon points="553.3,351.5 547.4,355.8 548.0,352.8 552.4,349.6" fill="#3a7cab" stroke="#0a1620" stroke-width="0.5" stroke-linejoin="round"/>
<polygon points="540.4,351.8 547.4,355.8 548.0,352.8 542.0,349.4" fill="#3d82ae" stroke="#0a1620" stroke-width="0.5" stroke-linejoin="round"/>
<polygon points="546.4,346.2 552.4,349.6 548.0,352.8 542.0,349.4" fill="#66cbfb" stroke="#0a1620" stroke-width="0.55" stroke-linejoin="round"/>
<polygon points="554.6,352.2 569.1,360.4 563.3,364.7 548.7,356.5" fill="#3a78a4" stroke="#0a1620" stroke-width="0.6" stroke-linejoin="round"/>
<polygon points="569.1,360.4 563.3,364.7 563.9,361.8 568.3,358.6" fill="#3a7cab" stroke="#0a1620" stroke-width="0.5" stroke-linejoin="round"/>
<polygon points="548.7,356.5 563.3,364.7 563.9,361.8 550.4,354.2" fill="#3d82ae" stroke="#0a1620" stroke-width="0.5" stroke-linejoin="round"/>
<polygon points="554.8,350.9 568.3,358.6 563.9,361.8 550.4,354.2" fill="#66cbfb" stroke="#0a1620" stroke-width="0.55" stroke-linejoin="round"/>
<polygon points="570.5,361.2 576.1,364.4 570.3,368.7 564.6,365.5" fill="#3a78a4" stroke="#0a1620" stroke-width="0.6" stroke-linejoin="round"/>
<polygon points="576.1,364.4 570.3,368.7 570.9,365.8 575.3,362.5" fill="#3a7cab" stroke="#0a1620" stroke-width="0.5" stroke-linejoin="round"/>
<polygon points="564.6,365.5 570.3,368.7 570.9,365.8 566.2,363.1" fill="#3d82ae" stroke="#0a1620" stroke-width="0.5" stroke-linejoin="round"/>
<polygon points="570.6,359.9 575.3,362.5 570.9,365.8 566.2,363.1" fill="#66cbfb" stroke="#0a1620" stroke-width="0.55" stroke-linejoin="round"/>
<polygon points="534.9,358.0 541.0,361.5 534.4,366.3 528.3,362.9" fill="#3a78a4" stroke="#0a1620" stroke-width="0.6" stroke-linejoin="round"/>
<polygon points="541.0,361.5 534.4,366.3 535.4,361.4 539.2,358.6" fill="#3a7cab" stroke="#0a1620" stroke-width="0.5" stroke-linejoin="round"/>
<polygon points="528.3,362.9 534.4,366.3 535.4,361.4 531.5,359.3" fill="#3d82ae" stroke="#0a1620" stroke-width="0.5" stroke-linejoin="round"/>
<polygon points="535.4,356.5 539.2,358.6 535.4,361.4 531.5,359.3" fill="#66cbfb" stroke="#0a1620" stroke-width="0.55" stroke-linejoin="round"/>
<polygon points="542.4,362.3 548.6,365.7 541.9,370.6 535.8,367.1" fill="#3a78a4" stroke="#0a1620" stroke-width="0.6" stroke-linejoin="round"/>
<polygon points="548.6,365.7 541.9,370.6 542.9,365.7 546.7,362.9" fill="#3a7cab" stroke="#0a1620" stroke-width="0.5" stroke-linejoin="round"/>
<polygon points="535.8,367.1 541.9,370.6 542.9,365.7 539.1,363.5" fill="#3d82ae" stroke="#0a1620" stroke-width="0.5" stroke-linejoin="round"/>
<polygon points="542.9,360.7 546.7,362.9 542.9,365.7 539.1,363.5" fill="#66cbfb" stroke="#0a1620" stroke-width="0.55" stroke-linejoin="round"/>
<polygon points="549.9,366.5 556.1,370.0 549.5,374.8 543.3,371.3" fill="#3a78a4" stroke="#0a1620" stroke-width="0.6" stroke-linejoin="round"/>
<polygon points="556.1,370.0 549.5,374.8 550.4,369.9 554.3,367.1" fill="#3a7cab" stroke="#0a1620" stroke-width="0.5" stroke-linejoin="round"/>
<polygon points="543.3,371.3 549.5,374.8 550.4,369.9 546.6,367.8" fill="#3d82ae" stroke="#0a1620" stroke-width="0.5" stroke-linejoin="round"/>
<polygon points="550.4,364.9 554.3,367.1 550.4,369.9 546.6,367.8" fill="#66cbfb" stroke="#0a1620" stroke-width="0.55" stroke-linejoin="round"/>
<polygon points="557.4,370.7 563.6,374.2 557.0,379.1 550.8,375.6" fill="#3a78a4" stroke="#0a1620" stroke-width="0.6" stroke-linejoin="round"/>
<polygon points="563.6,374.2 557.0,379.1 557.9,374.2 561.8,371.3" fill="#3a7cab" stroke="#0a1620" stroke-width="0.5" stroke-linejoin="round"/>
<polygon points="550.8,375.6 557.0,379.1 557.9,374.2 554.1,372.0" fill="#3d82ae" stroke="#0a1620" stroke-width="0.5" stroke-linejoin="round"/>
<polygon points="557.9,369.2 561.8,371.3 557.9,374.2 554.1,372.0" fill="#66cbfb" stroke="#0a1620" stroke-width="0.55" stroke-linejoin="round"/>
<polygon points="526.9,363.8 533.1,367.3 526.5,372.2 520.3,368.7" fill="#3a78a4" stroke="#0a1620" stroke-width="0.6" stroke-linejoin="round"/>
<polygon points="533.1,367.3 526.5,372.2 527.5,367.2 531.3,364.4" fill="#3a7cab" stroke="#0a1620" stroke-width="0.5" stroke-linejoin="round"/>
<polygon points="520.3,368.7 526.5,372.2 527.5,367.2 523.6,365.1" fill="#3d82ae" stroke="#0a1620" stroke-width="0.5" stroke-linejoin="round"/>
<polygon points="527.5,362.3 531.3,364.4 527.5,367.2 523.6,365.1" fill="#66cbfb" stroke="#0a1620" stroke-width="0.55" stroke-linejoin="round"/>
<polygon points="534.5,368.1 540.6,371.5 534.0,376.4 527.9,372.9" fill="#3a78a4" stroke="#0a1620" stroke-width="0.6" stroke-linejoin="round"/>
<polygon points="540.6,371.5 534.0,376.4 535.0,371.5 538.8,368.7" fill="#3a7cab" stroke="#0a1620" stroke-width="0.5" stroke-linejoin="round"/>
<polygon points="527.9,372.9 534.0,376.4 535.0,371.5 531.1,369.3" fill="#3d82ae" stroke="#0a1620" stroke-width="0.5" stroke-linejoin="round"/>
<polygon points="535.0,366.5 538.8,368.7 535.0,371.5 531.1,369.3" fill="#66cbfb" stroke="#0a1620" stroke-width="0.55" stroke-linejoin="round"/>
<polygon points="542.0,372.3 548.2,375.8 541.5,380.6 535.4,377.2" fill="#3a78a4" stroke="#0a1620" stroke-width="0.6" stroke-linejoin="round"/>
<polygon points="548.2,375.8 541.5,380.6 542.5,375.7 546.3,372.9" fill="#3a7cab" stroke="#0a1620" stroke-width="0.5" stroke-linejoin="round"/>
<polygon points="535.4,377.2 541.5,380.6 542.5,375.7 538.7,373.6" fill="#3d82ae" stroke="#0a1620" stroke-width="0.5" stroke-linejoin="round"/>
<polygon points="542.5,370.7 546.3,372.9 542.5,375.7 538.7,373.6" fill="#66cbfb" stroke="#0a1620" stroke-width="0.55" stroke-linejoin="round"/>
<polygon points="549.5,376.5 555.7,380.0 549.1,384.9 542.9,381.4" fill="#3a78a4" stroke="#0a1620" stroke-width="0.6" stroke-linejoin="round"/>
<polygon points="555.7,380.0 549.1,384.9 550.0,380.0 553.9,377.2" fill="#3a7cab" stroke="#0a1620" stroke-width="0.5" stroke-linejoin="round"/>
<polygon points="542.9,381.4 549.1,384.9 550.0,380.0 546.2,377.8" fill="#3d82ae" stroke="#0a1620" stroke-width="0.5" stroke-linejoin="round"/>
<polygon points="550.0,375.0 553.9,377.2 550.0,380.0 546.2,377.8" fill="#66cbfb" stroke="#0a1620" stroke-width="0.55" stroke-linejoin="round"/>
<polygon points="519.0,369.6 525.2,373.1 518.6,378.0 512.4,374.5" fill="#3a78a4" stroke="#0a1620" stroke-width="0.6" stroke-linejoin="round"/>
<polygon points="525.2,373.1 518.6,378.0 519.6,373.0 523.4,370.2" fill="#3a7cab" stroke="#0a1620" stroke-width="0.5" stroke-linejoin="round"/>
<polygon points="512.4,374.5 518.6,378.0 519.6,373.0 515.7,370.9" fill="#3d82ae" stroke="#0a1620" stroke-width="0.5" stroke-linejoin="round"/>
<polygon points="519.6,368.1 523.4,370.2 519.6,373.0 515.7,370.9" fill="#66cbfb" stroke="#0a1620" stroke-width="0.55" stroke-linejoin="round"/>
<polygon points="526.5,373.9 532.7,377.4 526.1,382.2 519.9,378.7" fill="#3a78a4" stroke="#0a1620" stroke-width="0.6" stroke-linejoin="round"/>
<polygon points="532.7,377.4 526.1,382.2 527.1,377.3 530.9,374.5" fill="#3a7cab" stroke="#0a1620" stroke-width="0.5" stroke-linejoin="round"/>
<polygon points="519.9,378.7 526.1,382.2 527.1,377.3 523.2,375.1" fill="#3d82ae" stroke="#0a1620" stroke-width="0.5" stroke-linejoin="round"/>
<polygon points="527.1,372.3 530.9,374.5 527.1,377.3 523.2,375.1" fill="#66cbfb" stroke="#0a1620" stroke-width="0.55" stroke-linejoin="round"/>
<polygon points="534.1,378.1 540.2,381.6 533.6,386.4 527.5,383.0" fill="#3a78a4" stroke="#0a1620" stroke-width="0.6" stroke-linejoin="round"/>
<polygon points="540.2,381.6 533.6,386.4 534.6,381.5 538.4,378.7" fill="#3a7cab" stroke="#0a1620" stroke-width="0.5" stroke-linejoin="round"/>
<polygon points="527.5,383.0 533.6,386.4 534.6,381.5 530.7,379.4" fill="#3d82ae" stroke="#0a1620" stroke-width="0.5" stroke-linejoin="round"/>
<polygon points="534.6,376.5 538.4,378.7 534.6,381.5 530.7,379.4" fill="#66cbfb" stroke="#0a1620" stroke-width="0.55" stroke-linejoin="round"/>
<polygon points="541.6,382.4 547.8,385.8 541.1,390.7 535.0,387.2" fill="#3a78a4" stroke="#0a1620" stroke-width="0.6" stroke-linejoin="round"/>
<polygon points="547.8,385.8 541.1,390.7 542.1,385.8 545.9,383.0" fill="#3a7cab" stroke="#0a1620" stroke-width="0.5" stroke-linejoin="round"/>
<polygon points="535.0,387.2 541.1,390.7 542.1,385.8 538.3,383.6" fill="#3d82ae" stroke="#0a1620" stroke-width="0.5" stroke-linejoin="round"/>
<polygon points="542.1,380.8 545.9,383.0 542.1,385.8 538.3,383.6" fill="#66cbfb" stroke="#0a1620" stroke-width="0.55" stroke-linejoin="round"/>
<polygon points="511.1,375.4 517.3,378.9 510.7,383.8 504.5,380.3" fill="#3a78a4" stroke="#0a1620" stroke-width="0.6" stroke-linejoin="round"/>
<polygon points="517.3,378.9 510.7,383.8 511.6,378.8 515.5,376.0" fill="#3a7cab" stroke="#0a1620" stroke-width="0.5" stroke-linejoin="round"/>
<polygon points="504.5,380.3 510.7,383.8 511.6,378.8 507.8,376.7" fill="#3d82ae" stroke="#0a1620" stroke-width="0.5" stroke-linejoin="round"/>
<polygon points="511.6,373.9 515.5,376.0 511.6,378.8 507.8,376.7" fill="#66cbfb" stroke="#0a1620" stroke-width="0.55" stroke-linejoin="round"/>
<polygon points="518.6,379.7 524.8,383.2 518.2,388.0 512.0,384.5" fill="#3a78a4" stroke="#0a1620" stroke-width="0.6" stroke-linejoin="round"/>
<polygon points="524.8,383.2 518.2,388.0 519.2,383.1 523.0,380.3" fill="#3a7cab" stroke="#0a1620" stroke-width="0.5" stroke-linejoin="round"/>
<polygon points="512.0,384.5 518.2,388.0 519.2,383.1 515.3,380.9" fill="#3d82ae" stroke="#0a1620" stroke-width="0.5" stroke-linejoin="round"/>
<polygon points="519.2,378.1 523.0,380.3 519.2,383.1 515.3,380.9" fill="#66cbfb" stroke="#0a1620" stroke-width="0.55" stroke-linejoin="round"/>
<polygon points="526.1,383.9 532.3,387.4 525.7,392.3 519.5,388.8" fill="#3a78a4" stroke="#0a1620" stroke-width="0.6" stroke-linejoin="round"/>
<polygon points="532.3,387.4 525.7,392.3 526.7,387.3 530.5,384.5" fill="#3a7cab" stroke="#0a1620" stroke-width="0.5" stroke-linejoin="round"/>
<polygon points="519.5,388.8 525.7,392.3 526.7,387.3 522.8,385.2" fill="#3d82ae" stroke="#0a1620" stroke-width="0.5" stroke-linejoin="round"/>
<polygon points="526.7,382.4 530.5,384.5 526.7,387.3 522.8,385.2" fill="#66cbfb" stroke="#0a1620" stroke-width="0.55" stroke-linejoin="round"/>
<polygon points="533.7,388.2 539.8,391.6 533.2,396.5 527.1,393.0" fill="#3a78a4" stroke="#0a1620" stroke-width="0.6" stroke-linejoin="round"/>
<polygon points="539.8,391.6 533.2,396.5 534.2,391.6 538.0,388.8" fill="#3a7cab" stroke="#0a1620" stroke-width="0.5" stroke-linejoin="round"/>
<polygon points="527.1,393.0 533.2,396.5 534.2,391.6 530.3,389.4" fill="#3d82ae" stroke="#0a1620" stroke-width="0.5" stroke-linejoin="round"/>
<polygon points="534.2,386.6 538.0,388.8 534.2,391.6 530.3,389.4" fill="#66cbfb" stroke="#0a1620" stroke-width="0.55" stroke-linejoin="round"/>
<polygon points="503.2,381.2 509.4,384.7 502.8,389.6 496.6,386.1" fill="#3a78a4" stroke="#0a1620" stroke-width="0.6" stroke-linejoin="round"/>
<polygon points="509.4,384.7 502.8,389.6 503.7,384.7 507.6,381.8" fill="#3a7cab" stroke="#0a1620" stroke-width="0.5" stroke-linejoin="round"/>
<polygon points="496.6,386.1 502.8,389.6 503.7,384.7 499.9,382.5" fill="#3d82ae" stroke="#0a1620" stroke-width="0.5" stroke-linejoin="round"/>
<polygon points="503.7,379.7 507.6,381.8 503.7,384.7 499.9,382.5" fill="#66cbfb" stroke="#0a1620" stroke-width="0.55" stroke-linejoin="round"/>
<polygon points="510.7,385.5 516.9,389.0 510.3,393.8 504.1,390.3" fill="#3a78a4" stroke="#0a1620" stroke-width="0.6" stroke-linejoin="round"/>
<polygon points="516.9,389.0 510.3,393.8 511.2,388.9 515.1,386.1" fill="#3a7cab" stroke="#0a1620" stroke-width="0.5" stroke-linejoin="round"/>
<polygon points="504.1,390.3 510.3,393.8 511.2,388.9 507.4,386.7" fill="#3d82ae" stroke="#0a1620" stroke-width="0.5" stroke-linejoin="round"/>
<polygon points="511.2,383.9 515.1,386.1 511.2,388.9 507.4,386.7" fill="#66cbfb" stroke="#0a1620" stroke-width="0.55" stroke-linejoin="round"/>
<polygon points="518.2,389.7 524.4,393.2 517.8,398.1 511.6,394.6" fill="#3a78a4" stroke="#0a1620" stroke-width="0.6" stroke-linejoin="round"/>
<polygon points="524.4,393.2 517.8,398.1 518.8,393.1 522.6,390.3" fill="#3a7cab" stroke="#0a1620" stroke-width="0.5" stroke-linejoin="round"/>
<polygon points="511.6,394.6 517.8,398.1 518.8,393.1 514.9,391.0" fill="#3d82ae" stroke="#0a1620" stroke-width="0.5" stroke-linejoin="round"/>
<polygon points="518.8,388.2 522.6,390.3 518.8,393.1 514.9,391.0" fill="#66cbfb" stroke="#0a1620" stroke-width="0.55" stroke-linejoin="round"/>
<polygon points="525.7,394.0 531.9,397.5 525.3,402.3 519.1,398.8" fill="#3a78a4" stroke="#0a1620" stroke-width="0.6" stroke-linejoin="round"/>
<polygon points="531.9,397.5 525.3,402.3 526.3,397.4 530.1,394.6" fill="#3a7cab" stroke="#0a1620" stroke-width="0.5" stroke-linejoin="round"/>
<polygon points="519.1,398.8 525.3,402.3 526.3,397.4 522.4,395.2" fill="#3d82ae" stroke="#0a1620" stroke-width="0.5" stroke-linejoin="round"/>
<polygon points="526.3,392.4 530.1,394.6 526.3,397.4 522.4,395.2" fill="#66cbfb" stroke="#0a1620" stroke-width="0.55" stroke-linejoin="round"/>
<polygon points="493.6,386.1 499.8,389.6 493.2,394.4 487.0,390.9" fill="#3a78a4" stroke="#0a1620" stroke-width="0.6" stroke-linejoin="round"/>
<polygon points="499.8,389.6 493.2,394.4 494.1,389.5 498.0,386.7" fill="#3a7cab" stroke="#0a1620" stroke-width="0.5" stroke-linejoin="round"/>
<polygon points="487.0,390.9 493.2,394.4 494.1,389.5 490.3,387.3" fill="#3d82ae" stroke="#0a1620" stroke-width="0.5" stroke-linejoin="round"/>
<polygon points="494.1,384.5 498.0,386.7 494.1,389.5 490.3,387.3" fill="#66cbfb" stroke="#0a1620" stroke-width="0.55" stroke-linejoin="round"/>
<polygon points="501.1,390.3 507.3,393.8 500.7,398.7 494.5,395.2" fill="#3a78a4" stroke="#0a1620" stroke-width="0.6" stroke-linejoin="round"/>
<polygon points="507.3,393.8 500.7,398.7 501.7,393.8 505.5,390.9" fill="#3a7cab" stroke="#0a1620" stroke-width="0.5" stroke-linejoin="round"/>
<polygon points="494.5,395.2 500.7,398.7 501.7,393.8 497.8,391.6" fill="#3d82ae" stroke="#0a1620" stroke-width="0.5" stroke-linejoin="round"/>
<polygon points="501.7,388.8 505.5,390.9 501.7,393.8 497.8,391.6" fill="#66cbfb" stroke="#0a1620" stroke-width="0.55" stroke-linejoin="round"/>
<polygon points="508.6,394.6 514.8,398.1 508.2,402.9 502.0,399.4" fill="#3a78a4" stroke="#0a1620" stroke-width="0.6" stroke-linejoin="round"/>
<polygon points="514.8,398.1 508.2,402.9 509.2,398.0 513.0,395.2" fill="#3a7cab" stroke="#0a1620" stroke-width="0.5" stroke-linejoin="round"/>
<polygon points="502.0,399.4 508.2,402.9 509.2,398.0 505.3,395.8" fill="#3d82ae" stroke="#0a1620" stroke-width="0.5" stroke-linejoin="round"/>
<polygon points="509.2,393.0 513.0,395.2 509.2,398.0 505.3,395.8" fill="#66cbfb" stroke="#0a1620" stroke-width="0.55" stroke-linejoin="round"/>
<polygon points="516.2,398.8 524.0,403.3 517.4,408.1 509.6,403.7" fill="#3a78a4" stroke="#0a1620" stroke-width="0.6" stroke-linejoin="round"/>
<polygon points="524.0,403.3 517.4,408.1 518.4,403.2 522.2,400.4" fill="#3a7cab" stroke="#0a1620" stroke-width="0.5" stroke-linejoin="round"/>
<polygon points="509.6,403.7 517.4,408.1 518.4,403.2 512.8,400.1" fill="#3d82ae" stroke="#0a1620" stroke-width="0.5" stroke-linejoin="round"/>
<polygon points="516.7,397.3 522.2,400.4 518.4,403.2 512.8,400.1" fill="#66cbfb" stroke="#0a1620" stroke-width="0.55" stroke-linejoin="round"/>
</svg>
<div class="sb" style="left:923px;width:40px;background:#ebebeb;padding-left:2.2px"><span style="display:inline-block;transform:scaleX(0.8);transform-origin:0 0">Snap : 1</span></div>
<div class="sb" style="left:966px;width:39.5px;background:#f3f3f3;padding-left:1.5px"><span style="display:inline-block;transform:scaleX(0.8);transform-origin:0 0">Units : mm</span></div>
</body></html>
